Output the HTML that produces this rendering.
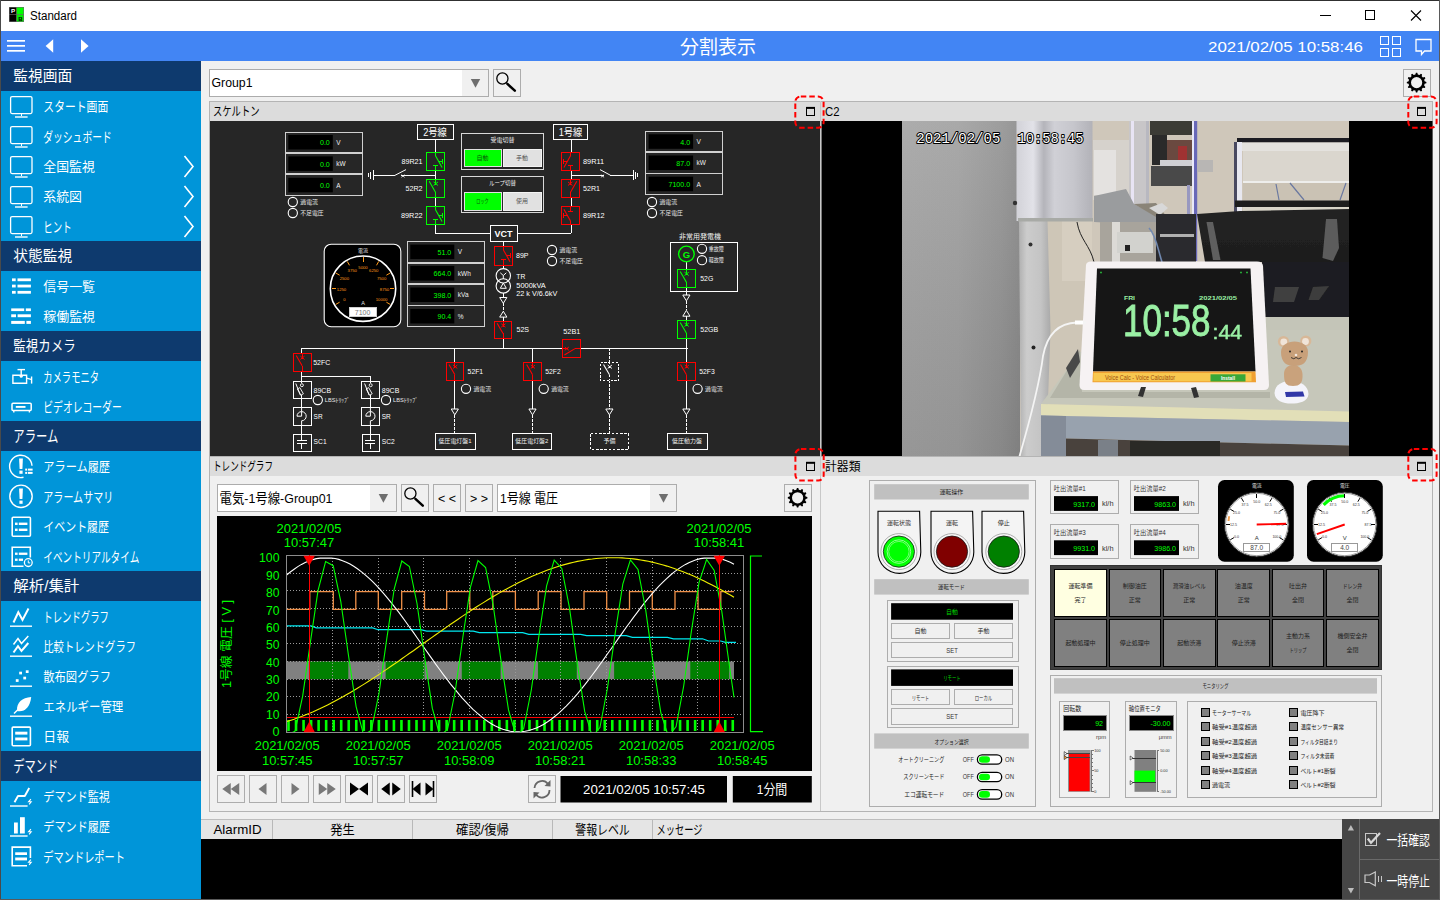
<!DOCTYPE html>
<html lang="ja"><head><meta charset="utf-8"><title>Standard</title>
<style>
html,body{margin:0;padding:0;background:#f0f0f0;overflow:hidden}
body{width:1440px;height:900px;font-family:"Liberation Sans", "Noto Sans CJK JP", sans-serif}
svg{display:block}
text{font-family:"Liberation Sans", "Noto Sans CJK JP", sans-serif;white-space:pre}
</style></head>
<body>
<svg width="1440" height="900" viewBox="0 0 1440 900">
<rect x="0" y="0" width="1440" height="900" fill="#f0f0f0" />
<rect x="0" y="0" width="1440" height="31" fill="#fff" />
<rect x="9" y="7" width="15" height="15" fill="#6a6a6a" />
<rect x="9.6" y="7.6" width="6.6" height="6.6" fill="#000" />
<rect x="9.6" y="14.8" width="6.6" height="6.6" fill="#000" />
<rect x="16.8" y="7.6" width="6.6" height="6.6" fill="#00ff00" />
<rect x="16.8" y="14.8" width="6.6" height="6.6" fill="#00f000" />
<text x="11" y="13.33" font-size="6.2" fill="#fff" font-weight="bold" >P</text>
<text x="18.3" y="20.56" font-size="6" fill="#000" font-weight="bold" >B</text>
<text x="30" y="20.32" font-size="12" fill="#000" textLength="47" lengthAdjust="spacingAndGlyphs" >Standard</text>
<line x1="1320" y1="15.5" x2="1331" y2="15.5" stroke="#000" stroke-width="1"  shape-rendering="crispEdges"/>
<rect x="1365.5" y="10.5" width="9" height="9" fill="none" stroke="#000" stroke-width="1" shape-rendering="crispEdges" />
<path d="M1411 10.5 L1421 20.5 M1421 10.5 L1411 20.5" fill="none" stroke="#000" stroke-width="1.1" />
<rect x="0" y="31" width="1440" height="30" fill="#4285f4" />
<rect x="7" y="40" width="18" height="1.7" fill="#fff" />
<rect x="7" y="45" width="18" height="1.7" fill="#fff" />
<rect x="7" y="50" width="18" height="1.7" fill="#fff" />
<polygon points="53.2,39.2 53.2,52.8 45.6,46" fill="#fff" />
<polygon points="81,39.2 81,52.8 88.6,46" fill="#fff" />
<text x="680" y="54.14" font-size="19" fill="#fff" textLength="76" lengthAdjust="spacingAndGlyphs" >分割表示</text>
<text x="1208" y="51.72" font-size="14.5" fill="#fff" textLength="155" lengthAdjust="spacingAndGlyphs" >2021/02/05 10:58:46</text>
<rect x="1380.5" y="36.5" width="8" height="8" fill="none" stroke="#fff" stroke-width="1" shape-rendering="crispEdges" />
<rect x="1392.5" y="36.5" width="8" height="8" fill="none" stroke="#fff" stroke-width="1" shape-rendering="crispEdges" />
<rect x="1380.5" y="48.5" width="8" height="8" fill="none" stroke="#fff" stroke-width="1" shape-rendering="crispEdges" />
<rect x="1392.5" y="48.5" width="8" height="8" fill="none" stroke="#fff" stroke-width="1" shape-rendering="crispEdges" />
<path d="M1416 39.5 H1431 V51 H1424.5 L1421.5 54.5 V51 H1416 Z" fill="none" stroke="#fff" stroke-width="1.3" />
<rect x="0" y="61" width="201" height="839" fill="#0095d9" />
<rect x="0" y="61" width="201" height="30" fill="#0e3a6e" />
<text x="13.3" y="81.40" font-size="15" fill="#fff" textLength="59" lengthAdjust="spacingAndGlyphs" >監視画面</text>
<text x="43.3" y="111.18" font-size="13" fill="#fff" textLength="65" lengthAdjust="spacingAndGlyphs" >スタート画面</text>
<rect x="10.6" y="96.6" width="21.4" height="17" fill="none" stroke="#fff" stroke-width="1.3" rx="1.5" />
<line x1="21.5" y1="114" x2="21.5" y2="116" stroke="#fff" stroke-width="1"  shape-rendering="crispEdges"/>
<line x1="15" y1="117" x2="27.6" y2="117" stroke="#fff" stroke-width="1.4" />
<text x="43.3" y="141.54" font-size="14" fill="#fff" textLength="68.4" lengthAdjust="spacingAndGlyphs" >ダッシュボード</text>
<rect x="10.6" y="126.6" width="21.4" height="17" fill="none" stroke="#fff" stroke-width="1.3" rx="1.5" />
<line x1="21.5" y1="144" x2="21.5" y2="146" stroke="#fff" stroke-width="1"  shape-rendering="crispEdges"/>
<line x1="15" y1="147" x2="27.6" y2="147" stroke="#fff" stroke-width="1.4" />
<text x="43.3" y="171.18" font-size="13" fill="#fff" textLength="51.6" lengthAdjust="spacingAndGlyphs" >全国監視</text>
<rect x="10.6" y="156.6" width="21.4" height="17" fill="none" stroke="#fff" stroke-width="1.3" rx="1.5" />
<line x1="21.5" y1="174" x2="21.5" y2="176" stroke="#fff" stroke-width="1"  shape-rendering="crispEdges"/>
<line x1="15" y1="177" x2="27.6" y2="177" stroke="#fff" stroke-width="1.4" />
<path d="M184.5 156 L193 166.5 L184.5 177" fill="none" stroke="#fff" stroke-width="1.6" />
<text x="43.3" y="201.18" font-size="13" fill="#fff" textLength="38.6" lengthAdjust="spacingAndGlyphs" >系統図</text>
<rect x="10.6" y="186.6" width="21.4" height="17" fill="none" stroke="#fff" stroke-width="1.3" rx="1.5" />
<line x1="21.5" y1="204" x2="21.5" y2="206" stroke="#fff" stroke-width="1"  shape-rendering="crispEdges"/>
<line x1="15" y1="207" x2="27.6" y2="207" stroke="#fff" stroke-width="1.4" />
<path d="M184.5 186 L193 196.5 L184.5 207" fill="none" stroke="#fff" stroke-width="1.6" />
<text x="43.3" y="231.54" font-size="14" fill="#fff" textLength="28.4" lengthAdjust="spacingAndGlyphs" >ヒント</text>
<rect x="10.6" y="216.6" width="21.4" height="17" fill="none" stroke="#fff" stroke-width="1.3" rx="1.5" />
<line x1="21.5" y1="234" x2="21.5" y2="236" stroke="#fff" stroke-width="1"  shape-rendering="crispEdges"/>
<line x1="15" y1="237" x2="27.6" y2="237" stroke="#fff" stroke-width="1.4" />
<path d="M184.5 216 L193 226.5 L184.5 237" fill="none" stroke="#fff" stroke-width="1.6" />
<rect x="0" y="241" width="201" height="30" fill="#0e3a6e" />
<text x="13.3" y="261.40" font-size="15" fill="#fff" textLength="59" lengthAdjust="spacingAndGlyphs" >状態監視</text>
<text x="43.3" y="291.18" font-size="13" fill="#fff" textLength="51.7" lengthAdjust="spacingAndGlyphs" >信号一覧</text>
<rect x="12" y="278.4" width="3.7" height="2.8" fill="#fff" />
<rect x="17.5" y="278.4" width="13.4" height="2.8" fill="#fff" />
<rect x="12" y="284.65" width="3.7" height="2.8" fill="#fff" />
<rect x="17.5" y="284.65" width="13.4" height="2.8" fill="#fff" />
<rect x="12" y="290.9" width="3.7" height="2.8" fill="#fff" />
<rect x="17.5" y="290.9" width="13.4" height="2.8" fill="#fff" />
<text x="43.3" y="321.18" font-size="13" fill="#fff" textLength="51.7" lengthAdjust="spacingAndGlyphs" >稼働監視</text>
<rect x="11.2" y="308.4" width="13" height="2.7" fill="#fff" />
<rect x="25.8" y="308.4" width="5.1" height="2.7" fill="#fff" />
<rect x="11.2" y="314.3" width="4.8" height="2.9" fill="#fff" />
<rect x="17.6" y="314.3" width="13.3" height="2.9" fill="#fff" />
<rect x="11.2" y="320.9" width="13.6" height="3" fill="#fff" />
<rect x="26.4" y="320.9" width="4.5" height="3" fill="#fff" />
<rect x="0" y="331" width="201" height="30" fill="#0e3a6e" />
<text x="13.3" y="351.40" font-size="15" fill="#fff" textLength="62.4" lengthAdjust="spacingAndGlyphs" >監視カメラ</text>
<text x="43.3" y="381.54" font-size="14" fill="#fff" textLength="55.7" lengthAdjust="spacingAndGlyphs" >カメラモニタ</text>
<line x1="17.5" y1="369.6" x2="25" y2="369.6" stroke="#fff" stroke-width="1.4" />
<line x1="21.2" y1="369.6" x2="21.2" y2="375" stroke="#fff" stroke-width="1.4" />
<path d="M12.9 375.2 H26.6 V383.2 H12.9 Z" fill="none" stroke="#fff" stroke-width="1.4" />
<circle cx="21.2" cy="376.3" r="1.5" fill="#fff" />
<line x1="31.6" y1="376.5" x2="31.6" y2="383.6" stroke="#fff" stroke-width="1.4" />
<line x1="26.6" y1="378.2" x2="31" y2="379.3" stroke="#fff" stroke-width="1.2" />
<text x="43.3" y="411.54" font-size="14" fill="#fff" textLength="78.4" lengthAdjust="spacingAndGlyphs" >ビデオレコーダー</text>
<rect x="12" y="403.2" width="19.2" height="7.3" fill="none" stroke="#fff" stroke-width="1.5" rx="1" />
<line x1="15.8" y1="406.9" x2="25.5" y2="406.9" stroke="#fff" stroke-width="1.9" />
<line x1="13.8" y1="410.5" x2="13.8" y2="412.5" stroke="#fff" stroke-width="1.4" />
<line x1="29.4" y1="410.5" x2="29.4" y2="412.5" stroke="#fff" stroke-width="1.4" />
<rect x="0" y="421" width="201" height="30" fill="#0e3a6e" />
<text x="13.3" y="441.76" font-size="16" fill="#fff" textLength="45" lengthAdjust="spacingAndGlyphs" >アラーム</text>
<text x="43.3" y="471.18" font-size="13" fill="#fff" textLength="66.7" lengthAdjust="spacingAndGlyphs" >アラーム履歴</text>
<path d="M32 465.8 A11.2 11.2 0 1 0 23.5 477.3" fill="none" stroke="#fff" stroke-width="1.4" />
<path d="M19.1 458.5 H22.9 L22.4 468.90000000000003 H19.6 Z" fill="#fff" />
<rect x="19.4" y="470.6" width="3.2" height="3.2" fill="#fff" />
<rect x="25.2" y="468.6" width="2" height="2" fill="#fff" />
<rect x="28" y="468.6" width="4.6" height="2" fill="#fff" />
<rect x="25.2" y="471.9" width="2" height="2" fill="#fff" />
<rect x="28" y="471.9" width="4.6" height="2" fill="#fff" />
<text x="43.3" y="501.54" font-size="14" fill="#fff" textLength="70" lengthAdjust="spacingAndGlyphs" >アラームサマリ</text>
<circle cx="21" cy="496.3" r="11.2" fill="none" stroke="#fff" stroke-width="1.4" />
<path d="M19.1 488.5 H22.9 L22.4 498.90000000000003 H19.6 Z" fill="#fff" />
<rect x="19.4" y="500.6" width="3.2" height="3.2" fill="#fff" />
<text x="43.3" y="531.18" font-size="13" fill="#fff" textLength="65.7" lengthAdjust="spacingAndGlyphs" >イベント履歴</text>
<rect x="12.2" y="517.2" width="18.2" height="19" fill="none" stroke="#fff" stroke-width="1.6" rx="1" />
<rect x="15" y="522.6" width="2.6" height="2.4" fill="#fff" />
<rect x="18.8" y="522.6" width="8.6" height="2.4" fill="#fff" />
<rect x="15" y="528.6" width="2.6" height="2.4" fill="#fff" />
<rect x="18.8" y="528.6" width="8.6" height="2.4" fill="#fff" />
<text x="43.3" y="561.54" font-size="14" fill="#fff" textLength="96" lengthAdjust="spacingAndGlyphs" >イベントリアルタイム</text>
<path d="M23.5 566.2 H12.2 V547.3 H30.3 V557.5" fill="none" stroke="#fff" stroke-width="1.6" />
<circle cx="28.3" cy="562.6" r="3.9" fill="none" stroke="#fff" stroke-width="1.3" />
<path d="M28.3 560.4 V562.9 H30.2" fill="none" stroke="#fff" stroke-width="1" />
<rect x="15" y="552.6" width="2.6" height="2.3" fill="#fff" />
<rect x="18.8" y="552.6" width="8.6" height="2.3" fill="#fff" />
<rect x="15" y="558.6" width="2.6" height="2.3" fill="#fff" />
<rect x="18.8" y="558.6" width="4.2" height="2.3" fill="#fff" />
<rect x="0" y="571" width="201" height="30" fill="#0e3a6e" />
<text x="13.3" y="591.40" font-size="15" fill="#fff" textLength="66" lengthAdjust="spacingAndGlyphs" >解析/集計</text>
<text x="43.3" y="621.54" font-size="14" fill="#fff" textLength="65.7" lengthAdjust="spacingAndGlyphs" >トレンドグラフ</text>
<line x1="10" y1="626.2" x2="32" y2="626.2" stroke="#fff" stroke-width="1.4" />
<path d="M13.5 622.5 L18.3 612.3 L22.5 620 L28.5 608.5" fill="none" stroke="#fff" stroke-width="2" />
<text x="43.3" y="651.18" font-size="13" fill="#fff" textLength="92.7" lengthAdjust="spacingAndGlyphs" >比較トレンドグラフ</text>
<line x1="10" y1="656.2" x2="32" y2="656.2" stroke="#fff" stroke-width="1.4" />
<path d="M13.5 644.5 L18 638.5 L21.5 643.5 L28.3 636" fill="none" stroke="#fff" stroke-width="1.5" />
<path d="M13.5 652.5 L18 646.2 L21.5 651 L28.3 643" fill="none" stroke="#fff" stroke-width="2" />
<text x="43.3" y="681.18" font-size="13" fill="#fff" textLength="67.7" lengthAdjust="spacingAndGlyphs" >散布図グラフ</text>
<line x1="10" y1="686.2" x2="32" y2="686.2" stroke="#fff" stroke-width="1.4" />
<rect x="19.2" y="671.7" width="2.8" height="2.7" fill="#fff" />
<rect x="25.8" y="670.3" width="2.8" height="2.7" fill="#fff" />
<rect x="23.3" y="676.7" width="2.8" height="2.7" fill="#fff" />
<rect x="15.8" y="679.2" width="2.8" height="2.7" fill="#fff" />
<text x="43.3" y="711.18" font-size="13" fill="#fff" textLength="80" lengthAdjust="spacingAndGlyphs" >エネルギー管理</text>
<line x1="10" y1="716.2" x2="32" y2="716.2" stroke="#fff" stroke-width="1.4" />
<path d="M31.2 697 C22 698 16.5 702 17 711 C24 712.5 30 708 31.2 697 Z" fill="#fff" />
<path d="M17.5 710 L14 713.5" fill="none" stroke="#fff" stroke-width="1.4" />
<text x="43.3" y="741.18" font-size="13" fill="#fff" textLength="25.7" lengthAdjust="spacingAndGlyphs" >日報</text>
<rect x="12.2" y="727.1" width="18.2" height="18.7" fill="none" stroke="#fff" stroke-width="1.6" rx="1" />
<rect x="15.2" y="731.7" width="12.2" height="2.9" fill="#fff" />
<rect x="15.2" y="737.5" width="12.2" height="2.9" fill="#fff" />
<rect x="0" y="751" width="201" height="30" fill="#0e3a6e" />
<text x="13.3" y="771.76" font-size="16" fill="#fff" textLength="45" lengthAdjust="spacingAndGlyphs" >デマンド</text>
<text x="43.3" y="801.18" font-size="13" fill="#fff" textLength="66.7" lengthAdjust="spacingAndGlyphs" >デマンド監視</text>
<line x1="10" y1="806" x2="27.6" y2="806" stroke="#fff" stroke-width="1.4" />
<path d="M14.5 802.3 L18 796 H24.8 L29.2 788" fill="none" stroke="#fff" stroke-width="1.9" stroke-linejoin="round"/>
<path d="M30.900000000000002 799.2 L28.6 801.8000000000001 H31.200000000000003 L29.1 804.4000000000001" fill="none" stroke="#fff" stroke-width="1.1" />
<text x="43.3" y="831.18" font-size="13" fill="#fff" textLength="66.7" lengthAdjust="spacingAndGlyphs" >デマンド履歴</text>
<line x1="10" y1="836" x2="27.6" y2="836" stroke="#fff" stroke-width="1.4" />
<rect x="14" y="822.5" width="3.8" height="11" fill="#fff" />
<rect x="20" y="817.2" width="4.8" height="16.3" fill="#fff" />
<path d="M30.900000000000002 829.2 L28.6 831.8000000000001 H31.200000000000003 L29.1 834.4000000000001" fill="none" stroke="#fff" stroke-width="1.1" />
<text x="43.3" y="861.54" font-size="14" fill="#fff" textLength="81.7" lengthAdjust="spacingAndGlyphs" >デマンドレポート</text>
<path d="M30.4 858 V847.1 H12.2 V865.8 H27" fill="none" stroke="#fff" stroke-width="1.6" />
<rect x="15.2" y="852.3" width="11.8" height="2.7" fill="#fff" />
<rect x="15.2" y="857.5" width="11.8" height="2.9" fill="#fff" />
<path d="M30.900000000000002 859.6 L28.6 862.2 H31.200000000000003 L29.1 864.8000000000001" fill="none" stroke="#fff" stroke-width="1.1" />
<rect x="0" y="0" width="1440" height="1" fill="#303030" />
<rect x="0" y="0" width="1" height="900" fill="#4a4a4a" />
<rect x="1439" y="0" width="1" height="900" fill="#606060" />
<rect x="0" y="899" width="1440" height="1" fill="#606060" />
<rect x="209.5" y="69.5" width="279" height="27" fill="#fff" stroke="#acacac" stroke-width="1" shape-rendering="crispEdges" />
<rect x="462" y="70" width="26" height="26" fill="#f0f0f0" />
<polygon points="470.8,79 480.2,79 475.5,87.8" fill="#6e6e6e" />
<text x="211.5" y="87.46" font-size="13.5" fill="#000" textLength="41" lengthAdjust="spacingAndGlyphs" >Group1</text>
<rect x="493.5" y="69.5" width="27" height="27" fill="#f0f0f0" stroke="#adadad" stroke-width="1" shape-rendering="crispEdges" />
<circle cx="502.4" cy="78.5" r="5.6" fill="none" stroke="#000" stroke-width="1.3" />
<line x1="507.4" y1="83.9" x2="514.8" y2="90.7" stroke="#000" stroke-width="2.5" stroke-linecap="round"/>
<rect x="1403.5" y="69.5" width="27" height="27" fill="#f0f0f0" stroke="#adadad" stroke-width="1" shape-rendering="crispEdges" />
<path d="M1424.60 81.33 L1426.38 81.92 L1426.38 83.28 L1424.60 83.87 L1424.16 85.50 L1425.41 86.90 L1424.72 88.08 L1422.89 87.70 L1421.70 88.89 L1422.08 90.72 L1420.90 91.41 L1419.50 90.16 L1417.87 90.60 L1417.28 92.38 L1415.92 92.38 L1415.33 90.60 L1413.70 90.16 L1412.30 91.41 L1411.12 90.72 L1411.50 88.89 L1410.31 87.70 L1408.48 88.08 L1407.79 86.90 L1409.04 85.50 L1408.60 83.87 L1406.82 83.28 L1406.82 81.92 L1408.60 81.33 L1409.04 79.70 L1407.79 78.30 L1408.48 77.12 L1410.31 77.50 L1411.50 76.31 L1411.12 74.48 L1412.30 73.79 L1413.70 75.04 L1415.33 74.60 L1415.92 72.82 L1417.28 72.82 L1417.87 74.60 L1419.50 75.04 L1420.90 73.79 L1422.08 74.48 L1421.70 76.31 L1422.89 77.50 L1424.72 77.12 L1425.41 78.30 L1424.16 79.70 Z M1422.20 82.60 A5.6 5.6 0 1 0 1411.00 82.60 A5.6 5.6 0 1 0 1422.20 82.60 Z" fill="#000" fill-rule="evenodd"/>
<rect x="209" y="101" width="1224" height="355" fill="#f0f0f0" />
<rect x="209" y="101.5" width="612" height="19.5" fill="#dcdcdc" />
<line x1="209" y1="101.5" x2="821" y2="101.5" stroke="#b4b4b4" stroke-width="1"  shape-rendering="crispEdges"/>
<text x="213" y="116.00" font-size="12.5" fill="#000" textLength="46.5" lengthAdjust="spacingAndGlyphs" >スケルトン</text>
<rect x="209.5" y="121" width="611" height="335" fill="#262626" />
<line x1="209.5" y1="101" x2="209.5" y2="456" stroke="#b4b4b4" stroke-width="1"  shape-rendering="crispEdges"/>
<rect x="285.5" y="132.5" width="77" height="20" fill="#262626" stroke="#d0d0d0" stroke-width="1" shape-rendering="crispEdges" />
<rect x="288.3" y="135" width="44.5" height="14.5" fill="#000" />
<text x="329.8" y="145.43" font-size="8" fill="#00ff00" text-anchor="end" textLength="9.8412" lengthAdjust="spacingAndGlyphs" >0.0</text>
<text x="336.3" y="144.89" font-size="6.5" fill="#f0f0f0" >V</text>
<rect x="285.5" y="153.5" width="77" height="20" fill="#262626" stroke="#d0d0d0" stroke-width="1" shape-rendering="crispEdges" />
<rect x="288.3" y="156.4" width="44.5" height="14.5" fill="#000" />
<text x="329.8" y="166.83" font-size="8" fill="#00ff00" text-anchor="end" textLength="9.8412" lengthAdjust="spacingAndGlyphs" >0.0</text>
<text x="336.3" y="166.29" font-size="6.5" fill="#f0f0f0" >kW</text>
<rect x="285.5" y="174.5" width="77" height="21" fill="#262626" stroke="#d0d0d0" stroke-width="1" shape-rendering="crispEdges" />
<rect x="288.3" y="177.8" width="44.5" height="14.5" fill="#000" />
<text x="329.8" y="188.23" font-size="8" fill="#00ff00" text-anchor="end" textLength="9.8412" lengthAdjust="spacingAndGlyphs" >0.0</text>
<text x="336.3" y="187.69" font-size="6.5" fill="#f0f0f0" >A</text>
<circle cx="292.8" cy="202" r="4.6" fill="none" stroke="#fff" stroke-width="1.1" />
<text x="300.3" y="204.23" font-size="6.2" fill="#e8e8e8" textLength="17.5" lengthAdjust="spacingAndGlyphs" >過電流</text>
<circle cx="292.8" cy="213" r="4.6" fill="none" stroke="#fff" stroke-width="1.1" />
<text x="300.3" y="215.23" font-size="6.2" fill="#e8e8e8" textLength="23.3" lengthAdjust="spacingAndGlyphs" >不足電圧</text>
<rect x="645.5" y="131.5" width="77" height="20" fill="#262626" stroke="#d0d0d0" stroke-width="1" shape-rendering="crispEdges" />
<rect x="648.6" y="134.3" width="44.5" height="14.5" fill="#000" />
<text x="690.1" y="144.73" font-size="8" fill="#00ff00" text-anchor="end" textLength="9.8412" lengthAdjust="spacingAndGlyphs" >4.0</text>
<text x="696.6" y="144.19" font-size="6.5" fill="#f0f0f0" >V</text>
<rect x="645.5" y="152.5" width="77" height="21" fill="#262626" stroke="#d0d0d0" stroke-width="1" shape-rendering="crispEdges" />
<rect x="648.6" y="155.5" width="44.5" height="14.5" fill="#000" />
<text x="690.1" y="165.93" font-size="8" fill="#00ff00" text-anchor="end" textLength="13.7777" lengthAdjust="spacingAndGlyphs" >87.0</text>
<text x="696.6" y="165.39" font-size="6.5" fill="#f0f0f0" >kW</text>
<rect x="645.5" y="173.5" width="77" height="21" fill="#262626" stroke="#d0d0d0" stroke-width="1" shape-rendering="crispEdges" />
<rect x="648.6" y="176.7" width="44.5" height="14.5" fill="#000" />
<text x="690.1" y="187.13" font-size="8" fill="#00ff00" text-anchor="end" textLength="21.6506" lengthAdjust="spacingAndGlyphs" >7100.0</text>
<text x="696.6" y="186.59" font-size="6.5" fill="#f0f0f0" >A</text>
<circle cx="652" cy="202" r="4.6" fill="none" stroke="#fff" stroke-width="1.1" />
<text x="659.5" y="204.23" font-size="6.2" fill="#e8e8e8" textLength="17.5" lengthAdjust="spacingAndGlyphs" >過電流</text>
<circle cx="652" cy="213" r="4.6" fill="none" stroke="#fff" stroke-width="1.1" />
<text x="659.5" y="215.23" font-size="6.2" fill="#e8e8e8" textLength="23.3" lengthAdjust="spacingAndGlyphs" >不足電圧</text>
<line x1="435.5" y1="140" x2="435.5" y2="233" stroke="#fff" stroke-width="1"  shape-rendering="crispEdges"/>
<line x1="435" y1="233.5" x2="490" y2="233.5" stroke="#fff" stroke-width="1"  shape-rendering="crispEdges"/>
<line x1="571.5" y1="140" x2="571.5" y2="233" stroke="#fff" stroke-width="1"  shape-rendering="crispEdges"/>
<line x1="517" y1="233.5" x2="571" y2="233.5" stroke="#fff" stroke-width="1"  shape-rendering="crispEdges"/>
<rect x="417.5" y="124.5" width="36" height="15" fill="#262626" stroke="#fff" stroke-width="1" shape-rendering="crispEdges" />
<text x="435" y="135.90" font-size="10" fill="#fff" text-anchor="middle" textLength="23.7" lengthAdjust="spacingAndGlyphs" >2号線</text>
<rect x="553.5" y="124.5" width="34" height="15" fill="#262626" stroke="#fff" stroke-width="1" shape-rendering="crispEdges" />
<text x="570.5" y="135.90" font-size="10" fill="#fff" text-anchor="middle" textLength="23.7" lengthAdjust="spacingAndGlyphs" >1号線</text>
<line x1="374" y1="175.5" x2="395" y2="175.5" stroke="#fff" stroke-width="1"  shape-rendering="crispEdges"/>
<line x1="395" y1="175.3" x2="406" y2="169.6" stroke="#fff" stroke-width="1" />
<line x1="401" y1="175.5" x2="435" y2="175.5" stroke="#fff" stroke-width="1"  shape-rendering="crispEdges"/>
<line x1="401.4" y1="174.72" x2="404.6" y2="177.28" stroke="#fff" stroke-width="0.8" />
<line x1="401.4" y1="177.28" x2="404.6" y2="174.72" stroke="#fff" stroke-width="0.8" />
<line x1="373.5" y1="170" x2="373.5" y2="180" stroke="#fff" stroke-width="1"  shape-rendering="crispEdges"/>
<line x1="370.5" y1="172" x2="370.5" y2="179" stroke="#fff" stroke-width="1"  shape-rendering="crispEdges"/>
<line x1="368.5" y1="173" x2="368.5" y2="177" stroke="#fff" stroke-width="1"  shape-rendering="crispEdges"/>
<line x1="571" y1="175.5" x2="604" y2="175.5" stroke="#fff" stroke-width="1"  shape-rendering="crispEdges"/>
<line x1="600" y1="169.6" x2="610.5" y2="175.3" stroke="#fff" stroke-width="1" />
<line x1="610" y1="175.5" x2="633" y2="175.5" stroke="#fff" stroke-width="1"  shape-rendering="crispEdges"/>
<line x1="600.9" y1="174.72" x2="604.1" y2="177.28" stroke="#fff" stroke-width="0.8" />
<line x1="600.9" y1="177.28" x2="604.1" y2="174.72" stroke="#fff" stroke-width="0.8" />
<line x1="633.5" y1="170" x2="633.5" y2="180" stroke="#fff" stroke-width="1"  shape-rendering="crispEdges"/>
<line x1="635.5" y1="172" x2="635.5" y2="179" stroke="#fff" stroke-width="1"  shape-rendering="crispEdges"/>
<line x1="637.5" y1="173" x2="637.5" y2="177" stroke="#fff" stroke-width="1"  shape-rendering="crispEdges"/>
<rect x="426.5" y="152.5" width="18" height="18" fill="#262626" stroke="#00ff00" stroke-width="1" shape-rendering="crispEdges" />
<line x1="435.5" y1="152" x2="435.5" y2="156" stroke="#00ff00" stroke-width="1"  shape-rendering="crispEdges"/>
<line x1="435.5" y1="155.8" x2="442.1" y2="167.6" stroke="#00ff00" stroke-width="1.1" />
<line x1="439" y1="161.5" x2="443" y2="161.5" stroke="#00ff00" stroke-width="1"  shape-rendering="crispEdges"/>
<line x1="442.5" y1="159" x2="442.5" y2="164" stroke="#00ff00" stroke-width="1"  shape-rendering="crispEdges"/>
<line x1="433" y1="165.5" x2="438" y2="165.5" stroke="#00ff00" stroke-width="1"  shape-rendering="crispEdges"/>
<line x1="435.5" y1="165" x2="435.5" y2="171" stroke="#00ff00" stroke-width="1"  shape-rendering="crispEdges"/>
<rect x="426.5" y="179.5" width="18" height="18" fill="#262626" stroke="#00ff00" stroke-width="1" shape-rendering="crispEdges" />
<line x1="435.5" y1="179" x2="435.5" y2="185" stroke="#00ff00" stroke-width="1"  shape-rendering="crispEdges"/>
<line x1="429.2" y1="181.3" x2="435.5" y2="192.2" stroke="#00ff00" stroke-width="1.1" />
<line x1="435.5" y1="192" x2="435.5" y2="198" stroke="#00ff00" stroke-width="1"  shape-rendering="crispEdges"/>
<line x1="433.6" y1="181.94" x2="438" y2="185.46" stroke="#00ff00" stroke-width="1" />
<line x1="433.6" y1="185.46" x2="438" y2="181.94" stroke="#00ff00" stroke-width="1" />
<rect x="426.5" y="206.5" width="18" height="18" fill="#262626" stroke="#00ff00" stroke-width="1" shape-rendering="crispEdges" />
<line x1="435.5" y1="206" x2="435.5" y2="210" stroke="#00ff00" stroke-width="1"  shape-rendering="crispEdges"/>
<line x1="435.5" y1="209.7" x2="442.1" y2="221.5" stroke="#00ff00" stroke-width="1.1" />
<line x1="439" y1="215.5" x2="443" y2="215.5" stroke="#00ff00" stroke-width="1"  shape-rendering="crispEdges"/>
<line x1="442.5" y1="213" x2="442.5" y2="218" stroke="#00ff00" stroke-width="1"  shape-rendering="crispEdges"/>
<line x1="433" y1="219.5" x2="438" y2="219.5" stroke="#00ff00" stroke-width="1"  shape-rendering="crispEdges"/>
<line x1="435.5" y1="219" x2="435.5" y2="225" stroke="#00ff00" stroke-width="1"  shape-rendering="crispEdges"/>
<text x="422.5" y="163.88" font-size="8" fill="#fff" text-anchor="end" textLength="21" lengthAdjust="spacingAndGlyphs" >89R21</text>
<text x="422.5" y="190.88" font-size="8" fill="#fff" text-anchor="end" textLength="17" lengthAdjust="spacingAndGlyphs" >52R2</text>
<text x="422.5" y="218.38" font-size="8" fill="#fff" text-anchor="end" textLength="21.5" lengthAdjust="spacingAndGlyphs" >89R22</text>
<rect x="561.5" y="152.5" width="18" height="18" fill="#262626" stroke="#ff0000" stroke-width="1" shape-rendering="crispEdges" />
<line x1="570.5" y1="152" x2="570.5" y2="156" stroke="#ff0000" stroke-width="1"  shape-rendering="crispEdges"/>
<line x1="570.5" y1="155.8" x2="563.9" y2="167.6" stroke="#ff0000" stroke-width="1.1" />
<line x1="567" y1="161.5" x2="563" y2="161.5" stroke="#ff0000" stroke-width="1"  shape-rendering="crispEdges"/>
<line x1="563.5" y1="159" x2="563.5" y2="164" stroke="#ff0000" stroke-width="1"  shape-rendering="crispEdges"/>
<line x1="573" y1="165.5" x2="568" y2="165.5" stroke="#ff0000" stroke-width="1"  shape-rendering="crispEdges"/>
<line x1="570.5" y1="165" x2="570.5" y2="171" stroke="#ff0000" stroke-width="1"  shape-rendering="crispEdges"/>
<rect x="561.5" y="179.5" width="18" height="18" fill="#262626" stroke="#ff0000" stroke-width="1" shape-rendering="crispEdges" />
<line x1="570.5" y1="179" x2="570.5" y2="185" stroke="#ff0000" stroke-width="1"  shape-rendering="crispEdges"/>
<line x1="576.8" y1="181.3" x2="570.5" y2="192.2" stroke="#ff0000" stroke-width="1.1" />
<line x1="570.5" y1="192" x2="570.5" y2="198" stroke="#ff0000" stroke-width="1"  shape-rendering="crispEdges"/>
<line x1="568" y1="181.94" x2="572.4" y2="185.46" stroke="#ff0000" stroke-width="1" />
<line x1="568" y1="185.46" x2="572.4" y2="181.94" stroke="#ff0000" stroke-width="1" />
<rect x="561.5" y="206.5" width="18" height="18" fill="#262626" stroke="#ff0000" stroke-width="1" shape-rendering="crispEdges" />
<line x1="570.5" y1="225" x2="570.5" y2="221" stroke="#ff0000" stroke-width="1"  shape-rendering="crispEdges"/>
<line x1="570.5" y1="221.1" x2="563.9" y2="209.3" stroke="#ff0000" stroke-width="1.1" />
<line x1="567" y1="215.5" x2="563" y2="215.5" stroke="#ff0000" stroke-width="1"  shape-rendering="crispEdges"/>
<line x1="563.5" y1="218" x2="563.5" y2="213" stroke="#ff0000" stroke-width="1"  shape-rendering="crispEdges"/>
<line x1="573" y1="211.5" x2="568" y2="211.5" stroke="#ff0000" stroke-width="1"  shape-rendering="crispEdges"/>
<line x1="570.5" y1="212" x2="570.5" y2="206" stroke="#ff0000" stroke-width="1"  shape-rendering="crispEdges"/>
<text x="583" y="163.88" font-size="8" fill="#fff" textLength="21" lengthAdjust="spacingAndGlyphs" >89R11</text>
<text x="583" y="190.88" font-size="8" fill="#fff" textLength="17" lengthAdjust="spacingAndGlyphs" >52R1</text>
<text x="583" y="218.38" font-size="8" fill="#fff" textLength="21.5" lengthAdjust="spacingAndGlyphs" >89R12</text>
<rect x="461.5" y="133.5" width="82" height="36" fill="#262626" stroke="#d8d8d8" stroke-width="1" shape-rendering="crispEdges" />
<text x="502.5" y="142.03" font-size="6.2" fill="#f0f0f0" text-anchor="middle" textLength="24" lengthAdjust="spacingAndGlyphs" >受電切替</text>
<rect x="464.5" y="149.5" width="37" height="17" fill="#00ff00" stroke="#e0e0e0" stroke-width="1" shape-rendering="crispEdges" />
<text x="482.5" y="159.53" font-size="6.2" fill="#0a5a0a" text-anchor="middle" textLength="12" lengthAdjust="spacingAndGlyphs" >自動</text>
<rect x="503.5" y="149.5" width="38" height="17" fill="#e1e1e1" stroke="#f4f4f4" stroke-width="1" shape-rendering="crispEdges" />
<text x="522" y="159.53" font-size="6.2" fill="#555" text-anchor="middle" textLength="12" lengthAdjust="spacingAndGlyphs" >手動</text>
<rect x="461.5" y="176.5" width="82" height="36" fill="#262626" stroke="#d8d8d8" stroke-width="1" shape-rendering="crispEdges" />
<text x="502.5" y="185.43" font-size="6.2" fill="#f0f0f0" text-anchor="middle" textLength="27" lengthAdjust="spacingAndGlyphs" >ループ切替</text>
<rect x="464.5" y="192.5" width="37" height="18" fill="#00ff00" stroke="#e0e0e0" stroke-width="1" shape-rendering="crispEdges" />
<text x="482.5" y="202.93" font-size="6.2" fill="#0a5a0a" text-anchor="middle" textLength="12.5" lengthAdjust="spacingAndGlyphs" >ロック</text>
<rect x="503.5" y="192.5" width="38" height="18" fill="#e1e1e1" stroke="#f4f4f4" stroke-width="1" shape-rendering="crispEdges" />
<text x="522" y="202.93" font-size="6.2" fill="#555" text-anchor="middle" textLength="12" lengthAdjust="spacingAndGlyphs" >使用</text>
<rect x="490.5" y="225.5" width="27" height="16" fill="#262626" stroke="#fff" stroke-width="1" shape-rendering="crispEdges" />
<text x="503.6" y="236.74" font-size="9" fill="#fff" text-anchor="middle" textLength="18" lengthAdjust="spacingAndGlyphs" font-weight="bold" >VCT</text>
<line x1="503.5" y1="241" x2="503.5" y2="268" stroke="#fff" stroke-width="1"  shape-rendering="crispEdges"/>
<line x1="503.5" y1="293" x2="503.5" y2="298" stroke="#fff" stroke-width="1"  shape-rendering="crispEdges"/>
<rect x="494.5" y="246.5" width="18" height="19" fill="#262626" stroke="#ff0000" stroke-width="1" shape-rendering="crispEdges" />
<line x1="503.5" y1="246" x2="503.5" y2="250" stroke="#ff0000" stroke-width="1"  shape-rendering="crispEdges"/>
<line x1="503.4" y1="249.9" x2="510" y2="261.7" stroke="#ff0000" stroke-width="1.1" />
<line x1="507" y1="255.5" x2="510" y2="255.5" stroke="#ff0000" stroke-width="1"  shape-rendering="crispEdges"/>
<line x1="510.5" y1="253" x2="510.5" y2="258" stroke="#ff0000" stroke-width="1"  shape-rendering="crispEdges"/>
<line x1="501" y1="259.5" x2="506" y2="259.5" stroke="#ff0000" stroke-width="1"  shape-rendering="crispEdges"/>
<line x1="503.5" y1="259" x2="503.5" y2="265" stroke="#ff0000" stroke-width="1"  shape-rendering="crispEdges"/>
<text x="516" y="258.38" font-size="8" fill="#fff" textLength="12.5" lengthAdjust="spacingAndGlyphs" >89P</text>
<circle cx="552" cy="250" r="4.6" fill="none" stroke="#fff" stroke-width="1.1" />
<text x="559.5" y="252.23" font-size="6.2" fill="#e8e8e8" textLength="17.5" lengthAdjust="spacingAndGlyphs" >過電流</text>
<circle cx="552" cy="261" r="4.6" fill="none" stroke="#fff" stroke-width="1.1" />
<text x="559.5" y="263.23" font-size="6.2" fill="#e8e8e8" textLength="23.3" lengthAdjust="spacingAndGlyphs" >不足電圧</text>
<circle cx="503.3" cy="275.8" r="7.2" fill="#262626" stroke="#fff" stroke-width="1.1" />
<circle cx="503.3" cy="285.9" r="7.2" fill="none" stroke="#fff" stroke-width="1.1" />
<path d="M500.3 272.8 L503.3 275.5 L506.3 272.8 M503.3 275.5 V279" fill="none" stroke="#fff" stroke-width="1" />
<polygon points="500.3,288.3 506.3,288.3 503.3,283" fill="none" stroke="#fff" stroke-width="1" />
<text x="516.3" y="279.18" font-size="8" fill="#fff" textLength="9" lengthAdjust="spacingAndGlyphs" >TR</text>
<text x="516.3" y="287.58" font-size="8" fill="#fff" textLength="29.5" lengthAdjust="spacingAndGlyphs" >5000kVA</text>
<text x="516.3" y="295.68" font-size="8" fill="#fff" textLength="41" lengthAdjust="spacingAndGlyphs" >22 k V/6.6kV</text>
<polygon points="499.7,297.5 506.9,297.5 503.3,303.3" fill="#262626" stroke="#fff" stroke-width="1" />
<line x1="503.5" y1="303" x2="503.5" y2="312" stroke="#fff" stroke-width="1" stroke-dasharray="2.5 1.5" shape-rendering="crispEdges"/>
<polygon points="499.7,317.1 506.9,317.1 503.3,311.3" fill="#262626" stroke="#fff" stroke-width="1" />
<line x1="503.5" y1="317" x2="503.5" y2="348" stroke="#fff" stroke-width="1"  shape-rendering="crispEdges"/>
<rect x="494.5" y="321.5" width="17" height="17" fill="#262626" stroke="#ff0000" stroke-width="1" shape-rendering="crispEdges" />
<line x1="503.5" y1="321" x2="503.5" y2="327" stroke="#ff0000" stroke-width="1"  shape-rendering="crispEdges"/>
<line x1="497.119" y1="323.165" x2="503.05" y2="333.428" stroke="#ff0000" stroke-width="1.1" />
<line x1="503.5" y1="333" x2="503.5" y2="339" stroke="#ff0000" stroke-width="1"  shape-rendering="crispEdges"/>
<line x1="501.279" y1="323.768" x2="505.421" y2="327.082" stroke="#ff0000" stroke-width="1" />
<line x1="501.279" y1="327.082" x2="505.421" y2="323.768" stroke="#ff0000" stroke-width="1" />
<text x="516.5" y="332.38" font-size="8" fill="#fff" textLength="12.5" lengthAdjust="spacingAndGlyphs" >52S</text>
<rect x="324.2" y="244.2" width="76.6" height="82.5" fill="#000" stroke="#fff" stroke-width="1.1" rx="7" />
<circle cx="363" cy="288.7" r="32.7" fill="none" stroke="#fff" stroke-width="1.6" />
<text x="363" y="252.00" font-size="5" fill="#e0e0e0" text-anchor="middle" >電流</text>
<line x1="335.72" y1="304.45" x2="339.617" y2="302.2" stroke="#ff9a1a" stroke-width="1" />
<text x="344.38" y="301.26" font-size="4.2" fill="#ff9a1a" text-anchor="middle" >0</text>
<line x1="332" y1="288.5" x2="336" y2="288.5" stroke="#ff9a1a" stroke-width="1"  shape-rendering="crispEdges"/>
<text x="341.5" y="290.51" font-size="4.2" fill="#ff9a1a" text-anchor="middle" >1250</text>
<line x1="335.72" y1="272.95" x2="339.617" y2="275.2" stroke="#ff9a1a" stroke-width="1" />
<text x="344.38" y="279.76" font-size="4.2" fill="#ff9a1a" text-anchor="middle" >2500</text>
<line x1="347.25" y1="261.42" x2="349.5" y2="265.317" stroke="#ff9a1a" stroke-width="1" />
<text x="352.25" y="271.89" font-size="4.2" fill="#ff9a1a" text-anchor="middle" >3750</text>
<line x1="363.5" y1="257" x2="363.5" y2="262" stroke="#ff9a1a" stroke-width="1"  shape-rendering="crispEdges"/>
<text x="363" y="269.01" font-size="4.2" fill="#ff9a1a" text-anchor="middle" >5000</text>
<line x1="378.75" y1="261.42" x2="376.5" y2="265.317" stroke="#ff9a1a" stroke-width="1" />
<text x="373.75" y="271.89" font-size="4.2" fill="#ff9a1a" text-anchor="middle" >6250</text>
<line x1="390.28" y1="272.95" x2="386.383" y2="275.2" stroke="#ff9a1a" stroke-width="1" />
<text x="381.62" y="279.76" font-size="4.2" fill="#ff9a1a" text-anchor="middle" >7500</text>
<line x1="394" y1="288.5" x2="390" y2="288.5" stroke="#ff9a1a" stroke-width="1"  shape-rendering="crispEdges"/>
<text x="384.5" y="290.51" font-size="4.2" fill="#ff9a1a" text-anchor="middle" >8750</text>
<line x1="390.28" y1="304.45" x2="386.383" y2="302.2" stroke="#ff9a1a" stroke-width="1" />
<text x="381.62" y="301.26" font-size="4.2" fill="#ff9a1a" text-anchor="middle" >10000</text>
<text x="363" y="304.98" font-size="5.5" fill="#e0e0e0" text-anchor="middle" >A</text>
<rect x="349.5" y="307.5" width="27" height="9" fill="#fff" stroke="#cfcfcf" stroke-width="1" shape-rendering="crispEdges" />
<text x="362.6" y="314.52" font-size="7" fill="#777" text-anchor="middle" >7100</text>
<rect x="407.5" y="241.5" width="77" height="21" fill="#262626" stroke="#d0d0d0" stroke-width="1" shape-rendering="crispEdges" />
<rect x="410.3" y="244.6" width="44" height="14.5" fill="#000" />
<text x="451.3" y="255.03" font-size="8" fill="#00ff00" text-anchor="end" textLength="13.7777" lengthAdjust="spacingAndGlyphs" >51.0</text>
<text x="457.8" y="254.49" font-size="6.5" fill="#f0f0f0" >V</text>
<rect x="407.5" y="263.5" width="77" height="20" fill="#262626" stroke="#d0d0d0" stroke-width="1" shape-rendering="crispEdges" />
<rect x="410.3" y="266.05" width="44" height="14.5" fill="#000" />
<text x="451.3" y="276.48" font-size="8" fill="#00ff00" text-anchor="end" textLength="17.7142" lengthAdjust="spacingAndGlyphs" >664.0</text>
<text x="457.8" y="275.94" font-size="6.5" fill="#f0f0f0" >kWh</text>
<rect x="407.5" y="284.5" width="77" height="21" fill="#262626" stroke="#d0d0d0" stroke-width="1" shape-rendering="crispEdges" />
<rect x="410.3" y="287.5" width="44" height="14.5" fill="#000" />
<text x="451.3" y="297.93" font-size="8" fill="#00ff00" text-anchor="end" textLength="17.7142" lengthAdjust="spacingAndGlyphs" >398.0</text>
<text x="457.8" y="297.39" font-size="6.5" fill="#f0f0f0" >kVa</text>
<rect x="407.5" y="305.5" width="77" height="21" fill="#262626" stroke="#d0d0d0" stroke-width="1" shape-rendering="crispEdges" />
<rect x="410.3" y="308.95" width="44" height="14.5" fill="#000" />
<text x="451.3" y="319.38" font-size="8" fill="#00ff00" text-anchor="end" textLength="13.7777" lengthAdjust="spacingAndGlyphs" >90.4</text>
<text x="457.8" y="318.84" font-size="6.5" fill="#f0f0f0" >%</text>
<text x="700" y="238.52" font-size="7" fill="#f0f0f0" text-anchor="middle" textLength="42" lengthAdjust="spacingAndGlyphs" >非常用発電機</text>
<rect x="670.5" y="242.5" width="67" height="49" fill="#262626" stroke="#fff" stroke-width="1" shape-rendering="crispEdges" />
<line x1="686.5" y1="262" x2="686.5" y2="295" stroke="#fff" stroke-width="1"  shape-rendering="crispEdges"/>
<circle cx="686.4" cy="253.9" r="7.8" fill="#262626" stroke="#00ff00" stroke-width="1.4" />
<text x="686.4" y="257.62" font-size="9.5" fill="#00ff00" text-anchor="middle" font-weight="bold" >G</text>
<circle cx="702" cy="248.8" r="4.6" fill="none" stroke="#fff" stroke-width="1.1" />
<text x="708.8" y="250.96" font-size="6" fill="#e8e8e8" textLength="15" lengthAdjust="spacingAndGlyphs" >重故障</text>
<circle cx="702" cy="260.2" r="4.6" fill="none" stroke="#fff" stroke-width="1.1" />
<text x="708.8" y="262.36" font-size="6" fill="#e8e8e8" textLength="15" lengthAdjust="spacingAndGlyphs" >軽故障</text>
<rect x="677.5" y="269.5" width="18" height="18" fill="#262626" stroke="#00ff00" stroke-width="1" shape-rendering="crispEdges" />
<line x1="686.5" y1="269" x2="686.5" y2="275" stroke="#00ff00" stroke-width="1"  shape-rendering="crispEdges"/>
<line x1="680.218" y1="271.539" x2="686.35" y2="282.149" stroke="#00ff00" stroke-width="1.1" />
<line x1="686.5" y1="282" x2="686.5" y2="288" stroke="#00ff00" stroke-width="1"  shape-rendering="crispEdges"/>
<line x1="684.509" y1="272.162" x2="688.791" y2="275.588" stroke="#00ff00" stroke-width="1" />
<line x1="684.509" y1="275.588" x2="688.791" y2="272.162" stroke="#00ff00" stroke-width="1" />
<text x="700.3" y="281.38" font-size="8" fill="#fff" textLength="13" lengthAdjust="spacingAndGlyphs" >52G</text>
<polygon points="682.8,295 690,295 686.4,300.8" fill="#262626" stroke="#fff" stroke-width="1" />
<line x1="686.5" y1="301" x2="686.5" y2="310" stroke="#fff" stroke-width="1" stroke-dasharray="2.5 1.5" shape-rendering="crispEdges"/>
<polygon points="682.8,316.2 690,316.2 686.4,310.4" fill="#262626" stroke="#fff" stroke-width="1" />
<line x1="686.5" y1="316" x2="686.5" y2="362" stroke="#fff" stroke-width="1"  shape-rendering="crispEdges"/>
<rect x="677.5" y="320.5" width="18" height="18" fill="#262626" stroke="#00ff00" stroke-width="1" shape-rendering="crispEdges" />
<line x1="686.5" y1="320" x2="686.5" y2="326" stroke="#00ff00" stroke-width="1"  shape-rendering="crispEdges"/>
<line x1="680.218" y1="322.439" x2="686.35" y2="333.049" stroke="#00ff00" stroke-width="1.1" />
<line x1="686.5" y1="333" x2="686.5" y2="338" stroke="#00ff00" stroke-width="1"  shape-rendering="crispEdges"/>
<line x1="684.509" y1="323.062" x2="688.791" y2="326.488" stroke="#00ff00" stroke-width="1" />
<line x1="684.509" y1="326.488" x2="688.791" y2="323.062" stroke="#00ff00" stroke-width="1" />
<text x="700.3" y="332.18" font-size="8" fill="#fff" textLength="18" lengthAdjust="spacingAndGlyphs" >52GB</text>
<line x1="301" y1="348.5" x2="688" y2="348.5" stroke="#fff" stroke-width="1"  shape-rendering="crispEdges"/>
<rect x="562.5" y="339.5" width="18" height="18" fill="#262626" stroke="#ff0000" stroke-width="1" shape-rendering="crispEdges" />
<line x1="562" y1="348.5" x2="568" y2="348.5" stroke="#ff0000" stroke-width="1"  shape-rendering="crispEdges"/>
<line x1="564.8" y1="347.05" x2="568.8" y2="350.25" stroke="#ff0000" stroke-width="1" />
<line x1="564.8" y1="350.25" x2="568.8" y2="347.05" stroke="#ff0000" stroke-width="1" />
<line x1="564.4" y1="354.95" x2="575" y2="348.65" stroke="#ff0000" stroke-width="1.1" />
<line x1="575" y1="348.5" x2="580" y2="348.5" stroke="#ff0000" stroke-width="1"  shape-rendering="crispEdges"/>
<text x="563.3" y="334.18" font-size="8" fill="#fff" textLength="17" lengthAdjust="spacingAndGlyphs" >52B1</text>
<line x1="301.5" y1="348" x2="301.5" y2="451" stroke="#fff" stroke-width="1"  shape-rendering="crispEdges"/>
<line x1="302" y1="376.5" x2="370" y2="376.5" stroke="#fff" stroke-width="1"  shape-rendering="crispEdges"/>
<line x1="370.5" y1="376" x2="370.5" y2="451" stroke="#fff" stroke-width="1"  shape-rendering="crispEdges"/>
<rect x="293.5" y="353.5" width="18" height="18" fill="#262626" stroke="#ff0000" stroke-width="1" shape-rendering="crispEdges" />
<line x1="302.5" y1="353" x2="302.5" y2="359" stroke="#ff0000" stroke-width="1"  shape-rendering="crispEdges"/>
<line x1="296.219" y1="355.565" x2="302.15" y2="365.828" stroke="#ff0000" stroke-width="1.1" />
<line x1="302.5" y1="366" x2="302.5" y2="371" stroke="#ff0000" stroke-width="1"  shape-rendering="crispEdges"/>
<line x1="300.379" y1="356.168" x2="304.521" y2="359.482" stroke="#ff0000" stroke-width="1" />
<line x1="300.379" y1="359.482" x2="304.521" y2="356.168" stroke="#ff0000" stroke-width="1" />
<text x="313.2" y="365.38" font-size="8" fill="#fff" textLength="17" lengthAdjust="spacingAndGlyphs" >52FC</text>
<rect x="293.5" y="381.5" width="18" height="17" fill="#262626" stroke="#fff" stroke-width="1" shape-rendering="crispEdges" />
<line x1="301.5" y1="381" x2="301.5" y2="383" stroke="#fff" stroke-width="1"  shape-rendering="crispEdges"/>
<circle cx="301.9" cy="385.2" r="1.5" fill="#262626" stroke="#fff" stroke-width="0.9" />
<line x1="295.8" y1="383.5" x2="300.4" y2="395.2" stroke="#fff" stroke-width="1" />
<line x1="301.5" y1="395" x2="301.5" y2="399" stroke="#fff" stroke-width="1"  shape-rendering="crispEdges"/>
<path d="M297.40000000000003 389 L299.8 387.6 L303.40000000000003 393.8 L300.8 395.2 Z" fill="none" stroke="#fff" stroke-width="0.9" />
<text x="313.6" y="393.18" font-size="8" fill="#fff" textLength="17.5" lengthAdjust="spacingAndGlyphs" >89CB</text>
<circle cx="317.8" cy="400" r="4.6" fill="none" stroke="#fff" stroke-width="1.1" />
<text x="324.8" y="402.23" font-size="6.2" fill="#e8e8e8" textLength="25" lengthAdjust="spacingAndGlyphs" >LBSﾄﾘｯﾌﾟ</text>
<rect x="293.5" y="407.5" width="18" height="18" fill="#262626" stroke="#fff" stroke-width="1" shape-rendering="crispEdges" />
<path d="M301.6 407.2 V411.59999999999997 M297.0 416.2 A4.6 4.6 0 1 1 301.6 420.8 V425.6 M297.0 416.2 H301.6 V411.59999999999997" fill="none" stroke="#fff" stroke-width="1" />
<text x="313.6" y="419.28" font-size="8" fill="#fff" textLength="9" lengthAdjust="spacingAndGlyphs" >SR</text>
<rect x="293.5" y="434.5" width="18" height="17" fill="#262626" stroke="#fff" stroke-width="1" shape-rendering="crispEdges" />
<line x1="301.5" y1="434" x2="301.5" y2="440" stroke="#fff" stroke-width="1"  shape-rendering="crispEdges"/>
<line x1="297" y1="440.5" x2="307" y2="440.5" stroke="#fff" stroke-width="1"  shape-rendering="crispEdges"/>
<line x1="297" y1="443.5" x2="307" y2="443.5" stroke="#fff" stroke-width="1"  shape-rendering="crispEdges"/>
<line x1="301.5" y1="444" x2="301.5" y2="449" stroke="#fff" stroke-width="1"  shape-rendering="crispEdges"/>
<text x="313.6" y="444.08" font-size="8" fill="#fff" textLength="13" lengthAdjust="spacingAndGlyphs" >SC1</text>
<rect x="361.5" y="381.5" width="18" height="17" fill="#262626" stroke="#fff" stroke-width="1" shape-rendering="crispEdges" />
<line x1="370.5" y1="381" x2="370.5" y2="383" stroke="#fff" stroke-width="1"  shape-rendering="crispEdges"/>
<circle cx="370.7" cy="385.2" r="1.5" fill="#262626" stroke="#fff" stroke-width="0.9" />
<line x1="364.6" y1="383.5" x2="369.2" y2="395.2" stroke="#fff" stroke-width="1" />
<line x1="370.5" y1="395" x2="370.5" y2="399" stroke="#fff" stroke-width="1"  shape-rendering="crispEdges"/>
<path d="M366.2 389 L368.59999999999997 387.6 L372.2 393.8 L369.59999999999997 395.2 Z" fill="none" stroke="#fff" stroke-width="0.9" />
<text x="381.8" y="393.18" font-size="8" fill="#fff" textLength="17.5" lengthAdjust="spacingAndGlyphs" >89CB</text>
<circle cx="386" cy="400" r="4.6" fill="none" stroke="#fff" stroke-width="1.1" />
<text x="393" y="402.23" font-size="6.2" fill="#e8e8e8" textLength="25" lengthAdjust="spacingAndGlyphs" >LBSﾄﾘｯﾌﾟ</text>
<rect x="361.5" y="407.5" width="18" height="18" fill="#262626" stroke="#fff" stroke-width="1" shape-rendering="crispEdges" />
<path d="M370.4 407.2 V411.59999999999997 M365.79999999999995 416.2 A4.6 4.6 0 1 1 370.4 420.8 V425.6 M365.79999999999995 416.2 H370.4 V411.59999999999997" fill="none" stroke="#fff" stroke-width="1" />
<text x="381.8" y="419.28" font-size="8" fill="#fff" textLength="9" lengthAdjust="spacingAndGlyphs" >SR</text>
<rect x="362.5" y="434.5" width="17" height="17" fill="#262626" stroke="#fff" stroke-width="1" shape-rendering="crispEdges" />
<line x1="370.5" y1="434" x2="370.5" y2="440" stroke="#fff" stroke-width="1"  shape-rendering="crispEdges"/>
<line x1="365" y1="440.5" x2="375" y2="440.5" stroke="#fff" stroke-width="1"  shape-rendering="crispEdges"/>
<line x1="365" y1="443.5" x2="375" y2="443.5" stroke="#fff" stroke-width="1"  shape-rendering="crispEdges"/>
<line x1="370.5" y1="444" x2="370.5" y2="449" stroke="#fff" stroke-width="1"  shape-rendering="crispEdges"/>
<text x="381.8" y="444.08" font-size="8" fill="#fff" textLength="13" lengthAdjust="spacingAndGlyphs" >SC2</text>
<line x1="454.5" y1="348" x2="454.5" y2="409" stroke="#fff" stroke-width="1"  shape-rendering="crispEdges"/>
<rect x="446.5" y="362.5" width="17" height="18" fill="#262626" stroke="#ff0000" stroke-width="1" shape-rendering="crispEdges" />
<line x1="454.5" y1="362" x2="454.5" y2="368" stroke="#ff0000" stroke-width="1"  shape-rendering="crispEdges"/>
<line x1="448.935" y1="364.478" x2="454.9" y2="374.798" stroke="#ff0000" stroke-width="1.1" />
<line x1="454.5" y1="375" x2="454.5" y2="380" stroke="#ff0000" stroke-width="1"  shape-rendering="crispEdges"/>
<line x1="453.117" y1="365.084" x2="457.283" y2="368.416" stroke="#ff0000" stroke-width="1" />
<line x1="453.117" y1="368.416" x2="457.283" y2="365.084" stroke="#ff0000" stroke-width="1" />
<text x="467.6" y="374.18" font-size="8" fill="#fff" textLength="15.5" lengthAdjust="spacingAndGlyphs" >52F1</text>
<circle cx="466" cy="388.8" r="4.6" fill="none" stroke="#fff" stroke-width="1.1" />
<text x="473.5" y="391.03" font-size="6.2" fill="#e8e8e8" textLength="17.5" lengthAdjust="spacingAndGlyphs" >過電流</text>
<polygon points="451.2,409 458.4,409 454.8,414.8" fill="#262626" stroke="#fff" stroke-width="1" />
<line x1="454.5" y1="415" x2="454.5" y2="433" stroke="#fff" stroke-width="1" stroke-dasharray="2.5 1.5" shape-rendering="crispEdges"/>
<rect x="435.5" y="433.5" width="40" height="16" fill="#262626" stroke="#fff" stroke-width="1" shape-rendering="crispEdges" />
<text x="455" y="443.46" font-size="6" fill="#f0f0f0" text-anchor="middle" textLength="33" lengthAdjust="spacingAndGlyphs" >低圧電灯盤1</text>
<line x1="532.5" y1="348" x2="532.5" y2="409" stroke="#fff" stroke-width="1"  shape-rendering="crispEdges"/>
<rect x="523.5" y="362.5" width="18" height="18" fill="#262626" stroke="#ff0000" stroke-width="1" shape-rendering="crispEdges" />
<line x1="532.5" y1="362" x2="532.5" y2="368" stroke="#ff0000" stroke-width="1"  shape-rendering="crispEdges"/>
<line x1="526.635" y1="364.478" x2="532.6" y2="374.798" stroke="#ff0000" stroke-width="1.1" />
<line x1="532.5" y1="375" x2="532.5" y2="380" stroke="#ff0000" stroke-width="1"  shape-rendering="crispEdges"/>
<line x1="530.817" y1="365.084" x2="534.983" y2="368.416" stroke="#ff0000" stroke-width="1" />
<line x1="530.817" y1="368.416" x2="534.983" y2="365.084" stroke="#ff0000" stroke-width="1" />
<text x="545.3" y="374.18" font-size="8" fill="#fff" textLength="15.5" lengthAdjust="spacingAndGlyphs" >52F2</text>
<circle cx="543.7" cy="388.8" r="4.6" fill="none" stroke="#fff" stroke-width="1.1" />
<text x="551.2" y="391.03" font-size="6.2" fill="#e8e8e8" textLength="17.5" lengthAdjust="spacingAndGlyphs" >過電流</text>
<polygon points="528.9,409 536.1,409 532.5,414.8" fill="#262626" stroke="#fff" stroke-width="1" />
<line x1="532.5" y1="415" x2="532.5" y2="433" stroke="#fff" stroke-width="1" stroke-dasharray="2.5 1.5" shape-rendering="crispEdges"/>
<rect x="512.5" y="433.5" width="39" height="16" fill="#262626" stroke="#fff" stroke-width="1" shape-rendering="crispEdges" />
<text x="531.85" y="443.46" font-size="6" fill="#f0f0f0" text-anchor="middle" textLength="33" lengthAdjust="spacingAndGlyphs" >低圧電灯盤2</text>
<line x1="609.5" y1="348" x2="609.5" y2="409" stroke="#fff" stroke-width="1" stroke-dasharray="2.5 1.5" shape-rendering="crispEdges"/>
<rect x="600.5" y="362.5" width="18" height="18" fill="#262626" stroke="#fff" stroke-width="1" shape-rendering="crispEdges" stroke-dasharray="2.2 1.6"/>
<line x1="609.5" y1="362" x2="609.5" y2="368" stroke="#fff" stroke-width="1" stroke-dasharray="2.2 1.6" shape-rendering="crispEdges"/>
<line x1="603.535" y1="364.478" x2="609.5" y2="374.798" stroke="#fff" stroke-width="1.1" />
<line x1="609.5" y1="375" x2="609.5" y2="380" stroke="#fff" stroke-width="1" stroke-dasharray="2.2 1.6" shape-rendering="crispEdges"/>
<line x1="607.717" y1="365.084" x2="611.883" y2="368.416" stroke="#fff" stroke-width="1" />
<line x1="607.717" y1="368.416" x2="611.883" y2="365.084" stroke="#fff" stroke-width="1" />
<polygon points="605.8,409 613,409 609.4,414.8" fill="#262626" stroke="#fff" stroke-width="1" />
<line x1="609.5" y1="415" x2="609.5" y2="433" stroke="#fff" stroke-width="1" stroke-dasharray="2.5 1.5" shape-rendering="crispEdges"/>
<rect x="590.5" y="433.5" width="38" height="16" fill="#262626" stroke="#fff" stroke-width="1" shape-rendering="crispEdges" stroke-dasharray="2.6 1.6"/>
<text x="609.4" y="443.46" font-size="6" fill="#f0f0f0" text-anchor="middle" textLength="12" lengthAdjust="spacingAndGlyphs" >予備</text>
<line x1="686.5" y1="348" x2="686.5" y2="409" stroke="#fff" stroke-width="1"  shape-rendering="crispEdges"/>
<rect x="677.5" y="362.5" width="18" height="18" fill="#262626" stroke="#ff0000" stroke-width="1" shape-rendering="crispEdges" />
<line x1="686.5" y1="362" x2="686.5" y2="368" stroke="#ff0000" stroke-width="1"  shape-rendering="crispEdges"/>
<line x1="680.535" y1="364.478" x2="686.5" y2="374.798" stroke="#ff0000" stroke-width="1.1" />
<line x1="686.5" y1="375" x2="686.5" y2="380" stroke="#ff0000" stroke-width="1"  shape-rendering="crispEdges"/>
<line x1="684.717" y1="365.084" x2="688.883" y2="368.416" stroke="#ff0000" stroke-width="1" />
<line x1="684.717" y1="368.416" x2="688.883" y2="365.084" stroke="#ff0000" stroke-width="1" />
<text x="699.2" y="374.18" font-size="8" fill="#fff" textLength="15.5" lengthAdjust="spacingAndGlyphs" >52F3</text>
<circle cx="697.6" cy="388.8" r="4.6" fill="none" stroke="#fff" stroke-width="1.1" />
<text x="705.1" y="391.03" font-size="6.2" fill="#e8e8e8" textLength="17.5" lengthAdjust="spacingAndGlyphs" >過電流</text>
<polygon points="682.8,409 690,409 686.4,414.8" fill="#262626" stroke="#fff" stroke-width="1" />
<line x1="686.5" y1="415" x2="686.5" y2="433" stroke="#fff" stroke-width="1" stroke-dasharray="2.5 1.5" shape-rendering="crispEdges"/>
<rect x="667.5" y="433.5" width="40" height="16" fill="#262626" stroke="#fff" stroke-width="1" shape-rendering="crispEdges" />
<text x="687.1" y="443.46" font-size="6" fill="#f0f0f0" text-anchor="middle" textLength="30" lengthAdjust="spacingAndGlyphs" >低圧動力盤</text>
<line x1="820.5" y1="101" x2="820.5" y2="456" stroke="#c8c8c8" stroke-width="1"  shape-rendering="crispEdges"/>
<rect x="821" y="101.5" width="612" height="19.5" fill="#dcdcdc" />
<line x1="821" y1="101.5" x2="1433" y2="101.5" stroke="#b4b4b4" stroke-width="1"  shape-rendering="crispEdges"/>
<text x="825" y="116.18" font-size="13" fill="#000" textLength="14.5" lengthAdjust="spacingAndGlyphs" >C2</text>
<line x1="1432.5" y1="101" x2="1432.5" y2="456" stroke="#b4b4b4" stroke-width="1"  shape-rendering="crispEdges"/>
<rect x="821.5" y="121" width="611" height="335" fill="#000" />
<defs>
<linearGradient id="cwall" x1="0" y1="0" x2="1" y2="0"><stop offset="0" stop-color="#a4a4a4"/><stop offset="0.5" stop-color="#a0a0a0"/><stop offset="0.85" stop-color="#939393"/><stop offset="1" stop-color="#8a8a8a"/></linearGradient>
<linearGradient id="cwallv" x1="0" y1="0" x2="0" y2="1"><stop offset="0" stop-color="#fff" stop-opacity="0.10"/><stop offset="1" stop-color="#000" stop-opacity="0.08"/></linearGradient>
<linearGradient id="ccyl" x1="0" y1="0" x2="1" y2="0"><stop offset="0" stop-color="#d2d2d8"/><stop offset="0.22" stop-color="#e2e2e8"/><stop offset="0.36" stop-color="#b4b4ba"/><stop offset="0.5" stop-color="#d0d0d6"/><stop offset="0.75" stop-color="#c6c6cc"/><stop offset="1" stop-color="#b2b2b8"/></linearGradient>
<linearGradient id="cpil" x1="0" y1="0" x2="1" y2="0"><stop offset="0" stop-color="#b0b0b0"/><stop offset="0.25" stop-color="#cccccc"/><stop offset="0.7" stop-color="#c4c4c4"/><stop offset="1" stop-color="#aaaaaa"/></linearGradient>
<linearGradient id="cchair" x1="0" y1="0" x2="0" y2="1"><stop offset="0" stop-color="#242424"/><stop offset="1" stop-color="#141414"/></linearGradient>
<filter id="cblur" x="-2%" y="-2%" width="104%" height="104%"><feGaussianBlur stdDeviation="0.5"/></filter>
<clipPath id="cclip"><rect x="902" y="121" width="447" height="335"/></clipPath>
</defs>
<g clip-path="url(#cclip)"><g filter="url(#cblur)">
<rect x="895" y="115" width="460" height="350" fill="#cfc7ba" />
<rect x="895" y="115" width="125" height="350" fill="url(#cwall)" />
<rect x="895" y="115" width="125" height="350" fill="url(#cwallv)" />
<rect x="1047" y="221" width="45" height="240" fill="#cec6b7" />
<rect x="1062" y="221" width="30" height="60" fill="#d6cec0" />
<polygon points="1019,221 1047.5,221 1050.5,330 1048,400 1041.5,456 1021,456" fill="url(#cpil)" />
<circle cx="1033.5" cy="347.5" r="2" fill="#222" />
<circle cx="1030.5" cy="244.5" r="2" fill="#333" />
<rect x="1016.5" y="115" width="76" height="106" fill="url(#ccyl)" />
<rect x="1018" y="218" width="75" height="3.5" fill="#a8aaa6" />
<circle cx="1015" cy="203" r="2.2" fill="#333" />
<rect x="1093" y="140" width="40" height="60" fill="#d6d2cc" />
<rect x="1094" y="150" width="22" height="45" fill="#e4e2e0" />
<rect x="1129" y="121" width="19" height="100" fill="#c8c6c8" />
<rect x="1131" y="121" width="3" height="95" fill="#e8e4f4" />
<rect x="1146" y="121" width="3" height="110" fill="#b8b8c0" />
<rect x="1150" y="121" width="44" height="14" fill="#3a3a36" />
<rect x="1152" y="135" width="15" height="30" fill="#2a2a2c" />
<rect x="1167" y="140" width="26" height="22" fill="#6a4a40" />
<rect x="1178" y="146" width="9" height="14" fill="#a03030" />
<rect x="1160" y="160" width="36" height="6" fill="#d0d0d4" />
<rect x="1151" y="166" width="45" height="20" fill="#4a4a48" />
<rect x="1194" y="121" width="3.2" height="140" fill="#6868b8" />
<rect x="1192" y="121" width="2" height="140" fill="#e8e8f8" />
<rect x="1187" y="185" width="3" height="40" fill="#9898c0" />
<rect x="1197" y="160" width="16" height="12" fill="#b8b6b4" />
<polygon points="1094,196 1126,189 1134,204 1168,222 1166,226 1094,222" fill="#9a9c9e" />
<polygon points="1134,204 1156,203 1170,221 1168,224" fill="#8a8478" />
<polygon points="1149,208 1162,203 1168,208 1160,215" fill="#d8d8d8" />
<rect x="1156" y="214" width="40" height="50" fill="#2c2c2e" />
<rect x="1160" y="234" width="34" height="3" fill="#b0b0b0" />
<rect x="1100" y="222" width="56" height="40" fill="#a8a49c" />
<rect x="1112" y="222" width="8" height="40" fill="#dcdad6" />
<rect x="1117" y="232" width="36" height="21" fill="#d2d2ce" />
<rect x="1125" y="245" width="5" height="6" fill="#222" />
<path d="M1149 228 C1156 235 1158 250 1162 262" fill="none" stroke="#7088b0" stroke-width="1.6" />
<path d="M1077 222 C1080 240 1090 245 1094 262" fill="none" stroke="#222" stroke-width="1" />
<rect x="1237" y="138" width="112" height="4.5" fill="#1e1e22" />
<rect x="1237" y="142.5" width="112" height="8.5" fill="#e4e2de" />
<rect x="1243" y="151" width="106" height="31" fill="#dad6ce" />
<rect x="1237" y="142" width="5" height="70" fill="#e8e8f0" />
<rect x="1234" y="142" width="3" height="70" fill="#484860" />
<rect x="1243" y="181" width="106" height="2" fill="#eeeeec" />
<rect x="1243" y="183" width="106" height="18" fill="#cac2b4" />
<path d="M1290 183 L1304 200 M1346 183 L1340 200 M1276 184 L1279 200" fill="none" stroke="#6a78a0" stroke-width="1.2" />
<rect x="1235" y="200.5" width="114" height="6.5" fill="#1a1a1c" />
<rect x="1243" y="207" width="106" height="4" fill="#d8d4c8" />
<polygon points="1197,214 1240,211 1349,209 1349,330 1262,330 1262,262 1205,262" fill="url(#cchair)" />
<polygon points="1206.5,222 1213,222 1220.5,260 1213,260" fill="#5e5e5e" />
<polygon points="1326,219 1337,219 1339,248 1333,261 1322.5,258" fill="#5c5c5c" />
<rect x="1262" y="262" width="87" height="56" fill="#1e1e20" />
<polygon points="1275,287 1299,287 1294,302 1273,302" fill="#404040" />
<polygon points="1313,287 1329,286 1319,300 1308.5,300" fill="#3c3c3c" />
<polygon points="1080,352 1262,317 1349,317 1349,412 1041,404" fill="#c6c7ba" />
<polygon points="1262,317 1349,317 1349,330 1262,330" fill="#c4c5b8" />
<polygon points="1066,372 1080,350 1082,392 1270,392 1270,398 1050,398" fill="#b4b5a8" />
<polygon points="1041,404 1349,411.5 1349,422 1041,415.5" fill="#e2dfb8" />
<polygon points="1041,415.5 1349,422 1349,445.5 1066,438.5 1066,456 1041,456" fill="#98a2ae" />
<polygon points="1041,415.5 1066,416 1066,456 1041,456" fill="#848c98" />
<polygon points="1066,438.5 1349,445.5 1349,456 1066,456" fill="#48423c" />
<rect x="1098" y="440" width="20" height="16" fill="#7a8088" />
<rect x="1130" y="441" width="90" height="15" fill="#2c2a28" />
<polygon points="1066,368 1078,349 1080,362 1070,378" fill="#4a4a4a" />
<path d="M1086 265 Q1086.5 261.5 1091 261.5 H1257 Q1262.5 261.5 1263 266 L1269 385 Q1269 390 1264 390 H1084 Q1079.5 390 1079.5 385 Z" fill="#f6f2f3" />
<polygon points="1097,268.5 1250.5,268.5 1255.5,371.5 1093,371.5" fill="#121414" />
<polygon points="1093,371.5 1255.5,371.5 1256,382.3 1092.5,382.3" fill="#f0a030" />
<rect x="1093.5" y="373" width="158" height="8.3" fill="#f8c850" />
<rect x="1210.5" y="374.3" width="35" height="7.2" fill="#38a838" />
<circle cx="1101" cy="272.5" r="0.9" fill="#30c040" />
<circle cx="1241" cy="272.5" r="0.9" fill="#30c040" />
<circle cx="1247" cy="272.5" r="0.9" fill="#30c040" />
<polygon points="1141,387 1146,387 1143,397 1138,396" fill="#333" />
<polygon points="1191,388 1196,387 1199,397 1194,398" fill="#333" />
<path d="M1086 322.5 H1077 C1058 323 1047 335 1043 356 C1040 380 1030 420 1019 458" fill="none" stroke="#f4f4f4" stroke-width="1.8" />
<rect x="1075" y="320.5" width="8" height="4" fill="#fff" />
<path d="M1274.5 393 C1275 384 1283 381 1291 381 C1300 381 1308 385 1308.5 394 C1308 402 1299 403.5 1291 403.5 C1283 403.5 1275 401 1274.5 393 Z" fill="#f4f4fa" />
<polygon points="1285,392 1303,391.5 1304.5,396.5 1286,397" fill="#3038a8" />
<path d="M1284 374 C1284 362 1302 362 1302.5 374 C1303 383 1300 386 1293 386 C1286 386 1284 383 1284 374 Z" fill="#c9a27c" />
<circle cx="1283.5" cy="341.5" r="5.6" fill="#d8b898" />
<circle cx="1283.8" cy="342" r="3.4" fill="#f0e4d8" />
<circle cx="1305.8" cy="341" r="5.6" fill="#d8b898" />
<circle cx="1305.5" cy="341.5" r="3.4" fill="#f0e4d8" />
<path d="M1281 352 C1281 338 1308 338 1308 352 C1308 363 1302 366 1294.5 366 C1287 366 1281 363 1281 352 Z" fill="#c8a07a" />
<circle cx="1290" cy="351.5" r="1" fill="#222" />
<circle cx="1302" cy="351.5" r="1" fill="#222" />
<circle cx="1296" cy="355" r="1.3" fill="#f4e8e0" />
<path d="M1291 357.5 Q1294 360 1296 357.5 Q1298.5 360 1301.5 357.5" fill="none" stroke="#222" stroke-width="0.8" />
</g>
<text x="1124" y="299.78" font-size="5.5" fill="#9af0a4" textLength="11" lengthAdjust="spacingAndGlyphs" font-weight="bold" >FRI</text>
<text x="1199" y="299.78" font-size="5.5" fill="#9af0a4" textLength="38" lengthAdjust="spacingAndGlyphs" font-weight="bold" >2021/02/05</text>
<text x="1123" y="336.2" font-size="44" fill="#9af0a4" stroke="#9af0a4" stroke-width="0.9" textLength="87.5" lengthAdjust="spacingAndGlyphs" filter="url(#cblur)">10:58</text>
<text x="1212.5" y="338.5" font-size="21" fill="#9af0a4" stroke="#9af0a4" stroke-width="0.5" textLength="29.5" lengthAdjust="spacingAndGlyphs" filter="url(#cblur)">:44</text>
<text x="1105" y="379.64" font-size="6.5" fill="#a05010" textLength="70" lengthAdjust="spacingAndGlyphs" >Voice Calc - Voice Calculator</text>
<text x="1228" y="380.16" font-size="6" fill="#fff" text-anchor="middle" textLength="14" lengthAdjust="spacingAndGlyphs" font-weight="bold" >Install</text>
<text x="916.3" y="143.2" font-size="14" style="font-family:'Liberation Mono', 'DejaVu Sans Mono', monospace" fill="#fff" stroke="#000" stroke-width="2" paint-order="stroke" stroke-linejoin="round" textLength="84" lengthAdjust="spacingAndGlyphs">2021/02/05</text>
<text x="1017.5" y="143.2" font-size="14" style="font-family:'Liberation Mono', 'DejaVu Sans Mono', monospace" fill="#fff" stroke="#000" stroke-width="2" paint-order="stroke" stroke-linejoin="round" textLength="66" lengthAdjust="spacingAndGlyphs">10:58:45</text>
</g>
<rect x="209" y="456.5" width="612" height="19.5" fill="#dcdcdc" />
<line x1="209" y1="456.5" x2="821" y2="456.5" stroke="#b4b4b4" stroke-width="1"  shape-rendering="crispEdges"/>
<text x="213" y="471.00" font-size="12.5" fill="#000" textLength="60" lengthAdjust="spacingAndGlyphs" >トレンドグラフ</text>
<line x1="209.5" y1="456" x2="209.5" y2="811" stroke="#b4b4b4" stroke-width="1"  shape-rendering="crispEdges"/>
<line x1="820.5" y1="456" x2="820.5" y2="811" stroke="#c8c8c8" stroke-width="1"  shape-rendering="crispEdges"/>
<line x1="209" y1="811.5" x2="1433" y2="811.5" stroke="#b4b4b4" stroke-width="1"  shape-rendering="crispEdges"/>
<rect x="217.5" y="484.5" width="179" height="27" fill="#fff" stroke="#acacac" stroke-width="1" shape-rendering="crispEdges" />
<rect x="370" y="485" width="26" height="26" fill="#f0f0f0" />
<polygon points="378.7,494 388.1,494 383.4,502.8" fill="#6e6e6e" />
<text x="219.5" y="502.86" font-size="13.5" fill="#000" textLength="113" lengthAdjust="spacingAndGlyphs" >電気-1号線-Group01</text>
<rect x="401.5" y="484.5" width="27" height="27" fill="#f0f0f0" stroke="#adadad" stroke-width="1" shape-rendering="crispEdges" />
<circle cx="410.4" cy="493.5" r="5.6" fill="none" stroke="#000" stroke-width="1.3" />
<line x1="415.4" y1="498.9" x2="422.8" y2="505.7" stroke="#000" stroke-width="2.5" stroke-linecap="round"/>
<rect x="433.5" y="484.5" width="27" height="27" fill="#f0f0f0" stroke="#adadad" stroke-width="1" shape-rendering="crispEdges" />
<text x="447" y="502.68" font-size="13" fill="#000" text-anchor="middle" textLength="18" lengthAdjust="spacingAndGlyphs" >&lt; &lt;</text>
<rect x="465.5" y="484.5" width="27" height="27" fill="#f0f0f0" stroke="#adadad" stroke-width="1" shape-rendering="crispEdges" />
<text x="479" y="502.68" font-size="13" fill="#000" text-anchor="middle" textLength="18" lengthAdjust="spacingAndGlyphs" >&gt; &gt;</text>
<rect x="497.5" y="484.5" width="179" height="27" fill="#fff" stroke="#acacac" stroke-width="1" shape-rendering="crispEdges" />
<rect x="650" y="485" width="26" height="26" fill="#f0f0f0" />
<polygon points="658.8,494 668.2,494 663.5,502.8" fill="#6e6e6e" />
<text x="500" y="502.86" font-size="13.5" fill="#000" textLength="58" lengthAdjust="spacingAndGlyphs" >1号線 電圧</text>
<rect x="784.5" y="484.5" width="27" height="27" fill="#f0f0f0" stroke="#adadad" stroke-width="1" shape-rendering="crispEdges" />
<path d="M805.60 496.53 L807.38 497.12 L807.38 498.48 L805.60 499.07 L805.16 500.70 L806.41 502.10 L805.72 503.28 L803.89 502.90 L802.70 504.09 L803.08 505.92 L801.90 506.61 L800.50 505.36 L798.87 505.80 L798.28 507.58 L796.92 507.58 L796.33 505.80 L794.70 505.36 L793.30 506.61 L792.12 505.92 L792.50 504.09 L791.31 502.90 L789.48 503.28 L788.79 502.10 L790.04 500.70 L789.60 499.07 L787.82 498.48 L787.82 497.12 L789.60 496.53 L790.04 494.90 L788.79 493.50 L789.48 492.32 L791.31 492.70 L792.50 491.51 L792.12 489.68 L793.30 488.99 L794.70 490.24 L796.33 489.80 L796.92 488.02 L798.28 488.02 L798.87 489.80 L800.50 490.24 L801.90 488.99 L803.08 489.68 L802.70 491.51 L803.89 492.70 L805.72 492.32 L806.41 493.50 L805.16 494.90 Z M803.20 497.80 A5.6 5.6 0 1 0 792.00 497.80 A5.6 5.6 0 1 0 803.20 497.80 Z" fill="#000" fill-rule="evenodd"/>
<rect x="217" y="516" width="595" height="255" fill="#000" />
<rect x="286.6" y="661.48" width="447.4" height="17.68" fill="#808080" />
<rect x="309.45" y="661.48" width="38.845" height="17.68" fill="#008000" />
<rect x="385.617" y="661.48" width="38.845" height="17.68" fill="#008000" />
<rect x="461.783" y="661.48" width="38.845" height="17.68" fill="#008000" />
<rect x="537.95" y="661.48" width="38.845" height="17.68" fill="#008000" />
<rect x="614.117" y="661.48" width="38.845" height="17.68" fill="#008000" />
<rect x="690.283" y="661.48" width="38.845" height="17.68" fill="#008000" />
<line x1="332.5" y1="555" x2="332.5" y2="732" stroke="#9a9a9a" stroke-width="1" stroke-dasharray="1 2" shape-rendering="crispEdges"/>
<line x1="378.5" y1="555" x2="378.5" y2="732" stroke="#9a9a9a" stroke-width="1" stroke-dasharray="1 2" shape-rendering="crispEdges"/>
<line x1="423.5" y1="555" x2="423.5" y2="732" stroke="#9a9a9a" stroke-width="1" stroke-dasharray="1 2" shape-rendering="crispEdges"/>
<line x1="469.5" y1="555" x2="469.5" y2="732" stroke="#9a9a9a" stroke-width="1" stroke-dasharray="1 2" shape-rendering="crispEdges"/>
<line x1="515.5" y1="555" x2="515.5" y2="732" stroke="#9a9a9a" stroke-width="1" stroke-dasharray="1 2" shape-rendering="crispEdges"/>
<line x1="560.5" y1="555" x2="560.5" y2="732" stroke="#9a9a9a" stroke-width="1" stroke-dasharray="1 2" shape-rendering="crispEdges"/>
<line x1="606.5" y1="555" x2="606.5" y2="732" stroke="#9a9a9a" stroke-width="1" stroke-dasharray="1 2" shape-rendering="crispEdges"/>
<line x1="652.5" y1="555" x2="652.5" y2="732" stroke="#9a9a9a" stroke-width="1" stroke-dasharray="1 2" shape-rendering="crispEdges"/>
<line x1="697.5" y1="555" x2="697.5" y2="732" stroke="#9a9a9a" stroke-width="1" stroke-dasharray="1 2" shape-rendering="crispEdges"/>
<line x1="287" y1="714.5" x2="744" y2="714.5" stroke="#9a9a9a" stroke-width="1" stroke-dasharray="1 2" shape-rendering="crispEdges"/>
<line x1="287" y1="696.5" x2="744" y2="696.5" stroke="#9a9a9a" stroke-width="1" stroke-dasharray="1 2" shape-rendering="crispEdges"/>
<line x1="287" y1="679.5" x2="744" y2="679.5" stroke="#9a9a9a" stroke-width="1" stroke-dasharray="1 2" shape-rendering="crispEdges"/>
<line x1="287" y1="661.5" x2="744" y2="661.5" stroke="#9a9a9a" stroke-width="1" stroke-dasharray="1 2" shape-rendering="crispEdges"/>
<line x1="287" y1="643.5" x2="744" y2="643.5" stroke="#9a9a9a" stroke-width="1" stroke-dasharray="1 2" shape-rendering="crispEdges"/>
<line x1="287" y1="626.5" x2="744" y2="626.5" stroke="#9a9a9a" stroke-width="1" stroke-dasharray="1 2" shape-rendering="crispEdges"/>
<line x1="287" y1="608.5" x2="744" y2="608.5" stroke="#9a9a9a" stroke-width="1" stroke-dasharray="1 2" shape-rendering="crispEdges"/>
<line x1="287" y1="590.5" x2="744" y2="590.5" stroke="#9a9a9a" stroke-width="1" stroke-dasharray="1 2" shape-rendering="crispEdges"/>
<line x1="287" y1="573.5" x2="744" y2="573.5" stroke="#9a9a9a" stroke-width="1" stroke-dasharray="1 2" shape-rendering="crispEdges"/>
<rect x="287.2" y="720" width="2.6" height="11" fill="#00ff00" />
<rect x="294.73" y="720" width="2.6" height="11" fill="#00ff00" />
<rect x="302.26" y="720" width="2.6" height="11" fill="#00ff00" />
<rect x="309.79" y="720" width="2.6" height="11" fill="#00ff00" />
<rect x="317.32" y="720" width="2.6" height="11" fill="#00ff00" />
<rect x="324.85" y="720" width="2.6" height="11" fill="#00ff00" />
<rect x="332.38" y="720" width="2.6" height="11" fill="#00ff00" />
<rect x="339.91" y="720" width="2.6" height="11" fill="#00ff00" />
<rect x="347.44" y="720" width="2.6" height="11" fill="#00ff00" />
<rect x="354.97" y="720" width="2.6" height="11" fill="#00ff00" />
<rect x="362.5" y="720" width="2.6" height="11" fill="#00ff00" />
<rect x="370.03" y="720" width="2.6" height="11" fill="#00ff00" />
<rect x="377.56" y="720" width="2.6" height="11" fill="#00ff00" />
<rect x="385.09" y="720" width="2.6" height="11" fill="#00ff00" />
<rect x="392.62" y="720" width="2.6" height="11" fill="#00ff00" />
<rect x="400.15" y="720" width="2.6" height="11" fill="#00ff00" />
<rect x="407.68" y="720" width="2.6" height="11" fill="#00ff00" />
<rect x="415.21" y="720" width="2.6" height="11" fill="#00ff00" />
<rect x="422.74" y="720" width="2.6" height="11" fill="#00ff00" />
<rect x="430.27" y="720" width="2.6" height="11" fill="#00ff00" />
<rect x="437.8" y="720" width="2.6" height="11" fill="#00ff00" />
<rect x="445.33" y="720" width="2.6" height="11" fill="#00ff00" />
<rect x="452.86" y="720" width="2.6" height="11" fill="#00ff00" />
<rect x="460.39" y="720" width="2.6" height="11" fill="#00ff00" />
<rect x="467.92" y="720" width="2.6" height="11" fill="#00ff00" />
<rect x="475.45" y="720" width="2.6" height="11" fill="#00ff00" />
<rect x="482.98" y="720" width="2.6" height="11" fill="#00ff00" />
<rect x="490.51" y="720" width="2.6" height="11" fill="#00ff00" />
<rect x="498.04" y="720" width="2.6" height="11" fill="#00ff00" />
<rect x="505.57" y="720" width="2.6" height="11" fill="#00ff00" />
<rect x="513.1" y="720" width="2.6" height="11" fill="#00ff00" />
<rect x="520.63" y="720" width="2.6" height="11" fill="#00ff00" />
<rect x="528.16" y="720" width="2.6" height="11" fill="#00ff00" />
<rect x="535.69" y="720" width="2.6" height="11" fill="#00ff00" />
<rect x="543.22" y="720" width="2.6" height="11" fill="#00ff00" />
<rect x="550.75" y="720" width="2.6" height="11" fill="#00ff00" />
<rect x="558.28" y="720" width="2.6" height="11" fill="#00ff00" />
<rect x="565.81" y="720" width="2.6" height="11" fill="#00ff00" />
<rect x="573.34" y="720" width="2.6" height="11" fill="#00ff00" />
<rect x="580.87" y="720" width="2.6" height="11" fill="#00ff00" />
<rect x="588.4" y="720" width="2.6" height="11" fill="#00ff00" />
<rect x="595.93" y="720" width="2.6" height="11" fill="#00ff00" />
<rect x="603.46" y="720" width="2.6" height="11" fill="#00ff00" />
<rect x="610.99" y="720" width="2.6" height="11" fill="#00ff00" />
<rect x="618.52" y="720" width="2.6" height="11" fill="#00ff00" />
<rect x="626.05" y="720" width="2.6" height="11" fill="#00ff00" />
<rect x="633.58" y="720" width="2.6" height="11" fill="#00ff00" />
<rect x="641.11" y="720" width="2.6" height="11" fill="#00ff00" />
<rect x="648.64" y="720" width="2.6" height="11" fill="#00ff00" />
<rect x="656.17" y="720" width="2.6" height="11" fill="#00ff00" />
<rect x="663.7" y="720" width="2.6" height="11" fill="#00ff00" />
<rect x="671.23" y="720" width="2.6" height="11" fill="#00ff00" />
<rect x="678.76" y="720" width="2.6" height="11" fill="#00ff00" />
<rect x="686.29" y="720" width="2.6" height="11" fill="#00ff00" />
<rect x="693.82" y="720" width="2.6" height="11" fill="#00ff00" />
<rect x="701.35" y="720" width="2.6" height="11" fill="#00ff00" />
<rect x="708.88" y="720" width="2.6" height="11" fill="#00ff00" />
<rect x="716.41" y="720" width="2.6" height="11" fill="#00ff00" />
<rect x="723.94" y="720" width="2.6" height="11" fill="#00ff00" />
<rect x="731.47" y="720" width="2.6" height="11" fill="#00ff00" />
<line x1="287" y1="717.5" x2="734" y2="717.5" stroke="#ff0000" stroke-width="1"  shape-rendering="crispEdges"/>
<clipPath id="tclip"><rect x="286.6" y="555.4" width="457.0" height="176.80000000000007"/></clipPath>
<g clip-path="url(#tclip)">
<polyline points="286.6,625.9 311.0,625.9 316.3,627.9 372.7,627.9 378.0,629.7 420.7,629.7 426.7,631.1 473.2,631.1 479.3,632.7 522.7,632.7 528.8,634.3 580.6,634.3 586.7,635.7 626.3,635.7 632.4,637.3 667.4,637.3 673.5,638.8 702.5,638.8 708.6,641.0 720.8,641.0 725.3,642.4 736.0,642.4" fill="none" stroke="#00e8f0" stroke-width="1.2" />
<polyline points="286.6,609.3 309.8,609.3 309.8,591.7 333.3,591.7 333.3,609.3 355.8,609.3 355.8,591.7 378.3,591.7 378.3,609.3 401.7,609.3 401.7,591.7 424.5,591.7 424.5,609.3 446.7,609.3 446.7,591.7 469.8,591.7 469.8,609.3 492.8,609.3 492.8,591.7 515.4,591.7 515.4,609.3 538.2,609.3 538.2,591.7 561.0,591.7 561.0,609.3 584.0,609.3 584.0,591.7 606.7,591.7 606.7,609.3 629.5,609.3 629.5,591.7 652.3,591.7 652.3,609.3 675.0,609.3 675.0,591.7 698.0,591.7 698.0,609.3 720.8,609.3 720.8,591.7 734.0,591.7" fill="none" stroke="#f09048" stroke-width="1.3" />
<polyline points="286.6,575.0 290.3,572.0 294.1,569.2 297.8,566.6 301.5,564.4 305.2,562.5 309.0,560.9 312.7,559.6 316.4,558.6 320.2,558.1 323.9,558.1 327.6,558.1 331.3,558.1 335.1,558.5 338.8,559.4 342.5,560.7 346.3,562.3 350.0,564.1 353.7,566.3 357.4,568.8 361.2,571.6 364.9,574.6 368.6,577.9 372.4,581.4 376.1,585.2 379.8,589.2 383.5,593.4 387.3,597.8 391.0,602.3 394.7,607.1 398.5,611.9 402.2,616.9 405.9,622.0 409.6,627.2 413.4,632.4 417.1,637.7 420.8,643.0 424.5,648.3 428.3,653.6 432.0,658.9 435.7,664.1 439.5,669.3 443.2,674.3 446.9,679.2 450.6,684.1 454.4,688.7 458.1,693.2 461.8,697.6 465.6,701.7 469.3,705.6 473.0,709.3 476.7,712.7 480.5,715.9 484.2,718.9 487.9,721.5 491.7,723.9 495.4,725.9 499.1,727.7 502.8,729.2 506.6,730.3 510.3,731.2 514.0,731.7 517.8,731.8 521.5,731.7 525.2,731.2 528.9,730.5 532.7,729.3 536.4,727.9 540.1,726.2 543.9,724.2 547.6,721.8 551.3,719.2 555.0,716.3 558.8,713.2 562.5,709.7 566.2,706.1 570.0,702.2 573.7,698.1 577.4,693.8 581.1,689.3 584.9,684.7 588.6,679.9 592.3,675.0 596.1,669.9 599.8,664.8 603.5,659.6 607.2,654.3 611.0,649.0 614.7,643.7 618.4,638.4 622.2,633.1 625.9,627.8 629.6,622.7 633.3,617.6 637.1,612.6 640.8,607.7 644.5,602.9 648.2,598.4 652.0,593.9 655.7,589.7 659.4,585.7 663.2,581.9 666.9,578.3 670.6,575.0 674.3,571.9 678.1,569.1 681.8,566.6 685.5,564.4 689.3,562.5 693.0,560.9 696.7,559.6 700.4,558.6 704.2,558.1 707.9,558.1 711.6,558.1 715.4,558.1 719.1,558.5 722.8,559.4 726.5,560.7 730.3,562.3 734.0,564.2" fill="none" stroke="#fff" stroke-width="1.1" />
<polyline points="286.6,721.6 290.3,720.4 294.1,719.2 297.8,717.8 301.5,716.5 305.2,715.0 309.0,713.5 312.7,711.9 316.4,710.2 320.2,708.5 323.9,706.7 327.6,704.9 331.3,703.0 335.1,701.0 338.8,699.0 342.5,697.0 346.3,694.8 350.0,692.7 353.7,690.5 357.4,688.2 361.2,685.9 364.9,683.6 368.6,681.2 372.4,678.8 376.1,676.4 379.8,673.9 383.5,671.4 387.3,668.9 391.0,666.3 394.7,663.7 398.5,661.2 402.2,658.5 405.9,655.9 409.6,653.3 413.4,650.7 417.1,648.0 420.8,645.4 424.5,642.7 428.3,640.0 432.0,637.4 435.7,634.8 439.5,632.1 443.2,629.5 446.9,626.9 450.6,624.3 454.4,621.7 458.1,619.2 461.8,616.6 465.6,614.1 469.3,611.6 473.0,609.2 476.7,606.8 480.5,604.4 484.2,602.1 487.9,599.8 491.7,597.5 495.4,595.3 499.1,593.1 502.8,591.0 506.6,588.9 510.3,586.9 514.0,584.9 517.8,583.0 521.5,581.2 525.2,579.4 528.9,577.7 532.7,576.0 536.4,574.4 540.1,572.9 543.9,571.4 547.6,570.0 551.3,568.7 555.0,567.4 558.8,566.2 562.5,565.1 566.2,564.1 570.0,563.1 573.7,562.2 577.4,561.4 581.1,560.7 584.9,560.0 588.6,559.4 592.3,559.0 596.1,558.5 599.8,558.2 603.5,558.0 607.2,557.8 611.0,557.7 614.7,557.7 618.4,557.8 622.2,557.9 625.9,558.2 629.6,558.5 633.3,558.9 637.1,559.4 640.8,560.0 644.5,560.6 648.2,561.3 652.0,562.1 655.7,563.0 659.4,564.0 663.2,565.0 666.9,566.1 670.6,567.3 674.3,568.5 678.1,569.9 681.8,571.3 685.5,572.7 689.3,574.3 693.0,575.8 696.7,577.5 700.4,579.2 704.2,581.0 707.9,582.9 711.6,584.8 715.4,586.7 719.1,588.7 722.8,590.8 726.5,592.9 730.3,595.1 734.0,597.3" fill="none" stroke="#f0f000" stroke-width="1.1" />
<polyline points="279.9,704.9 287.5,734.7 295.1,731.2 302.7,695.8 310.4,642.1 318.0,590.7 325.6,561.5 333.2,565.7 340.8,601.6 348.5,655.5 356.1,706.6 363.7,735.2 371.3,730.3 378.9,693.9 386.6,639.8 394.2,589.0 401.8,561.0 409.4,566.5 417.0,603.5 424.7,657.7 432.3,708.2 439.9,735.7 447.5,729.5 455.1,692.0 462.8,637.6 470.4,587.4 478.0,560.5 485.6,567.5 493.2,605.4 500.9,659.9 508.5,709.9 516.1,736.1 523.7,728.5 531.3,690.0 539.0,635.4 546.6,585.8 554.2,560.2 561.8,568.4 569.4,607.4 577.1,662.1 584.7,711.4 592.3,736.5 599.9,727.5 607.5,688.0 615.2,633.3 622.8,584.2 630.4,559.8 638.0,569.4 645.6,609.4 653.3,664.3 660.9,713.0 668.5,736.8 676.1,726.5 683.7,686.0 691.4,631.1 699.0,582.7 706.6,559.5 714.2,570.5 721.8,611.4 729.5,666.5 734.0,697.3" fill="none" stroke="#00ff00" stroke-width="1.1" />
</g>
<rect x="286.5" y="555.5" width="457" height="177" fill="none" stroke="#8c8c8c" stroke-width="1" shape-rendering="crispEdges" />
<line x1="309.5" y1="555" x2="309.5" y2="732" stroke="#ff0000" stroke-width="1"  shape-rendering="crispEdges"/>
<polygon points="303.5,555.8 314.9,555.8 309.2,565.8" fill="#ff0000" />
<polygon points="303.5,732.2 314.9,732.2 309.2,721.8" fill="#ff0000" />
<line x1="719.5" y1="555" x2="719.5" y2="732" stroke="#ff0000" stroke-width="1"  shape-rendering="crispEdges"/>
<polygon points="713.6,555.8 725,555.8 719.3,565.8" fill="#ff0000" />
<polygon points="713.6,732.2 725,732.2 719.3,721.8" fill="#ff0000" />
<path d="M762 556 H750.5 V731.6 H763" fill="none" stroke="#00ff00" stroke-width="1.2" />
<text x="279.5" y="736.18" font-size="13" fill="#00ff00" text-anchor="end" textLength="7" lengthAdjust="spacingAndGlyphs" >0</text>
<text x="279.5" y="718.80" font-size="13" fill="#00ff00" text-anchor="end" textLength="13.5" lengthAdjust="spacingAndGlyphs" >10</text>
<text x="279.5" y="701.42" font-size="13" fill="#00ff00" text-anchor="end" textLength="13.5" lengthAdjust="spacingAndGlyphs" >20</text>
<text x="279.5" y="684.04" font-size="13" fill="#00ff00" text-anchor="end" textLength="13.5" lengthAdjust="spacingAndGlyphs" >30</text>
<text x="279.5" y="666.66" font-size="13" fill="#00ff00" text-anchor="end" textLength="13.5" lengthAdjust="spacingAndGlyphs" >40</text>
<text x="279.5" y="649.28" font-size="13" fill="#00ff00" text-anchor="end" textLength="13.5" lengthAdjust="spacingAndGlyphs" >50</text>
<text x="279.5" y="631.90" font-size="13" fill="#00ff00" text-anchor="end" textLength="13.5" lengthAdjust="spacingAndGlyphs" >60</text>
<text x="279.5" y="614.52" font-size="13" fill="#00ff00" text-anchor="end" textLength="13.5" lengthAdjust="spacingAndGlyphs" >70</text>
<text x="279.5" y="597.14" font-size="13" fill="#00ff00" text-anchor="end" textLength="13.5" lengthAdjust="spacingAndGlyphs" >80</text>
<text x="279.5" y="579.76" font-size="13" fill="#00ff00" text-anchor="end" textLength="13.5" lengthAdjust="spacingAndGlyphs" >90</text>
<text x="279.5" y="562.38" font-size="13" fill="#00ff00" text-anchor="end" textLength="20.5" lengthAdjust="spacingAndGlyphs" >100</text>
<text transform="translate(231,644) rotate(-90)" font-size="12" fill="#00ff00" text-anchor="middle" textLength="88" lengthAdjust="spacingAndGlyphs">1号線 電圧 [ V ]</text>
<text x="309" y="532.68" font-size="13" fill="#00ff00" text-anchor="middle" textLength="65" lengthAdjust="spacingAndGlyphs" >2021/02/05</text>
<text x="309" y="547.18" font-size="13" fill="#00ff00" text-anchor="middle" textLength="50.5" lengthAdjust="spacingAndGlyphs" >10:57:47</text>
<text x="719" y="532.68" font-size="13" fill="#00ff00" text-anchor="middle" textLength="65" lengthAdjust="spacingAndGlyphs" >2021/02/05</text>
<text x="719" y="547.18" font-size="13" fill="#00ff00" text-anchor="middle" textLength="50.5" lengthAdjust="spacingAndGlyphs" >10:58:41</text>
<text x="287.2" y="750.18" font-size="13" fill="#00ff00" text-anchor="middle" textLength="65" lengthAdjust="spacingAndGlyphs" >2021/02/05</text>
<text x="287.2" y="765.38" font-size="13" fill="#00ff00" text-anchor="middle" textLength="50.5" lengthAdjust="spacingAndGlyphs" >10:57:45</text>
<text x="378.2" y="750.18" font-size="13" fill="#00ff00" text-anchor="middle" textLength="65" lengthAdjust="spacingAndGlyphs" >2021/02/05</text>
<text x="378.2" y="765.38" font-size="13" fill="#00ff00" text-anchor="middle" textLength="50.5" lengthAdjust="spacingAndGlyphs" >10:57:57</text>
<text x="469.2" y="750.18" font-size="13" fill="#00ff00" text-anchor="middle" textLength="65" lengthAdjust="spacingAndGlyphs" >2021/02/05</text>
<text x="469.2" y="765.38" font-size="13" fill="#00ff00" text-anchor="middle" textLength="50.5" lengthAdjust="spacingAndGlyphs" >10:58:09</text>
<text x="560.2" y="750.18" font-size="13" fill="#00ff00" text-anchor="middle" textLength="65" lengthAdjust="spacingAndGlyphs" >2021/02/05</text>
<text x="560.2" y="765.38" font-size="13" fill="#00ff00" text-anchor="middle" textLength="50.5" lengthAdjust="spacingAndGlyphs" >10:58:21</text>
<text x="651.2" y="750.18" font-size="13" fill="#00ff00" text-anchor="middle" textLength="65" lengthAdjust="spacingAndGlyphs" >2021/02/05</text>
<text x="651.2" y="765.38" font-size="13" fill="#00ff00" text-anchor="middle" textLength="50.5" lengthAdjust="spacingAndGlyphs" >10:58:33</text>
<text x="742.2" y="750.18" font-size="13" fill="#00ff00" text-anchor="middle" textLength="65" lengthAdjust="spacingAndGlyphs" >2021/02/05</text>
<text x="742.2" y="765.38" font-size="13" fill="#00ff00" text-anchor="middle" textLength="50.5" lengthAdjust="spacingAndGlyphs" >10:58:45</text>
<rect x="217.5" y="775.5" width="27" height="27" fill="#f0f0f0" stroke="#adadad" stroke-width="1" shape-rendering="crispEdges" />
<rect x="249.5" y="775.5" width="27" height="27" fill="#f0f0f0" stroke="#adadad" stroke-width="1" shape-rendering="crispEdges" />
<rect x="281.5" y="775.5" width="27" height="27" fill="#f0f0f0" stroke="#adadad" stroke-width="1" shape-rendering="crispEdges" />
<rect x="313.5" y="775.5" width="27" height="27" fill="#f0f0f0" stroke="#adadad" stroke-width="1" shape-rendering="crispEdges" />
<rect x="345.5" y="775.5" width="27" height="27" fill="#f0f0f0" stroke="#adadad" stroke-width="1" shape-rendering="crispEdges" />
<rect x="377.5" y="775.5" width="27" height="27" fill="#f0f0f0" stroke="#adadad" stroke-width="1" shape-rendering="crispEdges" />
<rect x="409.5" y="775.5" width="27" height="27" fill="#f0f0f0" stroke="#adadad" stroke-width="1" shape-rendering="crispEdges" />
<polygon points="230.75,783 230.75,795 222.25,789" fill="#787878" />
<polygon points="239.25,783 239.25,795 230.75,789" fill="#787878" />
<polygon points="266.5,783 266.5,795 258.5,789" fill="#787878" />
<polygon points="291.5,783 291.5,795 299.5,789" fill="#787878" />
<polygon points="318.75,783 318.75,795 327.25,789" fill="#787878" />
<polygon points="327.25,783 327.25,795 335.75,789" fill="#787878" />
<polygon points="350,782.5 350,795.5 359,789" fill="#000" />
<polygon points="368,782.5 368,795.5 359,789" fill="#000" />
<polygon points="389.75,782.5 389.75,795.5 381.25,789" fill="#000" />
<polygon points="392.25,782.5 392.25,795.5 400.75,789" fill="#000" />
<polygon points="420.5,782.5 420.5,795.5 412.5,789" fill="#000" />
<polygon points="425.5,782.5 425.5,795.5 433.5,789" fill="#000" />
<line x1="412.5" y1="781" x2="412.5" y2="797" stroke="#000" stroke-width="1.6" />
<line x1="433.5" y1="781" x2="433.5" y2="797" stroke="#000" stroke-width="1.6" />
<rect x="528.5" y="775.5" width="27" height="27" fill="#f0f0f0" stroke="#adadad" stroke-width="1" shape-rendering="crispEdges" />
<path d="M534.5 788 A7.5 7.5 0 0 1 548 784" fill="none" stroke="#666" stroke-width="1.8" />
<polygon points="550.5,780 550.5,786.5 544.5,786" fill="#666" />
<path d="M549.5 790 A7.5 7.5 0 0 1 536 794.5" fill="none" stroke="#666" stroke-width="1.8" />
<polygon points="533.5,798.5 533.5,792 539.5,792.5" fill="#666" />
<rect x="560.5" y="776" width="166.5" height="26.5" fill="#000" />
<text x="644" y="794.36" font-size="13.5" fill="#fff" text-anchor="middle" textLength="122" lengthAdjust="spacingAndGlyphs" >2021/02/05 10:57:45</text>
<rect x="732.8" y="776" width="79" height="26.5" fill="#000" />
<text x="772" y="794.36" font-size="13.5" fill="#fff" text-anchor="middle" textLength="30.5" lengthAdjust="spacingAndGlyphs" >1分間</text>
<rect x="821" y="456.5" width="612" height="19.5" fill="#dcdcdc" />
<line x1="821" y1="456.5" x2="1433" y2="456.5" stroke="#b4b4b4" stroke-width="1"  shape-rendering="crispEdges"/>
<text x="825" y="470.82" font-size="12" fill="#000" textLength="35.5" lengthAdjust="spacingAndGlyphs" >計器類</text>
<line x1="1432.5" y1="456" x2="1432.5" y2="811" stroke="#b4b4b4" stroke-width="1"  shape-rendering="crispEdges"/>
<rect x="869.5" y="480.5" width="166" height="326" fill="#f0f0f0" stroke="#adadad" stroke-width="1" shape-rendering="crispEdges" />
<rect x="874.2" y="484.2" width="154.6" height="15.3" fill="#c0c0c0" />
<text x="951.5" y="494.38" font-size="6.2" fill="#222" text-anchor="middle" textLength="23.5" lengthAdjust="spacingAndGlyphs" >運転操作</text>
<path d="M878 511.3 H919.5999999999999 L920.8 552.0 A21.4 21.4 0 0 1 878 552.0 Z" fill="#f4f4f4" stroke="#000" stroke-width="1.1" />
<text x="898.9" y="525.13" font-size="6.2" fill="#333" text-anchor="middle" textLength="24" lengthAdjust="spacingAndGlyphs" >運転状態</text>
<circle cx="898.9" cy="551.6" r="18" fill="#f8f8f8" stroke="#9a9a9a" stroke-width="0.8" />
<circle cx="898.9" cy="551.6" r="15.6" fill="#00ff00" stroke="#1a1a1a" stroke-width="0.8" />
<circle cx="898.9" cy="551.6" r="11.8" fill="none" stroke="#a0ffa0" stroke-width="0.9" />
<circle cx="898.9" cy="551.6" r="10.2" fill="none" stroke="#a0ffa0" stroke-width="0.7" />
<path d="M931 511.3 H972.5999999999999 L973.8 552.0 A21.4 21.4 0 0 1 931 552.0 Z" fill="#f4f4f4" stroke="#000" stroke-width="1.1" />
<text x="952" y="525.13" font-size="6.2" fill="#333" text-anchor="middle" textLength="12" lengthAdjust="spacingAndGlyphs" >運転</text>
<circle cx="952" cy="551.6" r="18" fill="#f8f8f8" stroke="#9a9a9a" stroke-width="0.8" />
<circle cx="952" cy="551.6" r="15.6" fill="#800000" stroke="#1a1a1a" stroke-width="0.8" />
<path d="M982 511.3 H1023.5999999999999 L1024.8 552.0 A21.4 21.4 0 0 1 982 552.0 Z" fill="#f4f4f4" stroke="#000" stroke-width="1.1" />
<text x="1003.8" y="525.13" font-size="6.2" fill="#333" text-anchor="middle" textLength="12" lengthAdjust="spacingAndGlyphs" >停止</text>
<circle cx="1003.8" cy="551.6" r="18" fill="#f8f8f8" stroke="#9a9a9a" stroke-width="0.8" />
<circle cx="1003.8" cy="551.6" r="15.6" fill="#008000" stroke="#1a1a1a" stroke-width="0.8" />
<rect x="874.2" y="579.2" width="154.6" height="15.4" fill="#c0c0c0" />
<text x="951.5" y="589.43" font-size="6.2" fill="#222" text-anchor="middle" textLength="27" lengthAdjust="spacingAndGlyphs" >運転モード</text>
<rect x="887.5" y="600.5" width="131" height="61" fill="#f0f0f0" stroke="#adadad" stroke-width="1" shape-rendering="crispEdges" />
<rect x="891.1" y="603.2" width="121.9" height="16.5" fill="#000" />
<text x="952" y="613.83" font-size="6.2" fill="#00d000" text-anchor="middle" textLength="12" lengthAdjust="spacingAndGlyphs" >自動</text>
<rect x="891.5" y="623.5" width="58" height="15" fill="#f0f0f0" stroke="#adadad" stroke-width="1" shape-rendering="crispEdges" />
<text x="920.5" y="633.33" font-size="6.2" fill="#333" text-anchor="middle" textLength="12" lengthAdjust="spacingAndGlyphs" >自動</text>
<rect x="954.5" y="623.5" width="58" height="15" fill="#f0f0f0" stroke="#adadad" stroke-width="1" shape-rendering="crispEdges" />
<text x="983.5" y="633.33" font-size="6.2" fill="#333" text-anchor="middle" textLength="12" lengthAdjust="spacingAndGlyphs" >手動</text>
<rect x="891.5" y="642.5" width="121" height="15" fill="#f0f0f0" stroke="#adadad" stroke-width="1" shape-rendering="crispEdges" />
<text x="952" y="652.54" font-size="6.5" fill="#333" text-anchor="middle" textLength="11.5" lengthAdjust="spacingAndGlyphs" >SET</text>
<rect x="887.5" y="666.5" width="131" height="61" fill="#f0f0f0" stroke="#adadad" stroke-width="1" shape-rendering="crispEdges" />
<rect x="891.1" y="669.4" width="121.9" height="16.5" fill="#000" />
<text x="952" y="680.03" font-size="6.2" fill="#00d000" text-anchor="middle" textLength="17.5" lengthAdjust="spacingAndGlyphs" >リモート</text>
<rect x="891.5" y="689.5" width="58" height="15" fill="#f0f0f0" stroke="#adadad" stroke-width="1" shape-rendering="crispEdges" />
<text x="920.5" y="699.53" font-size="6.2" fill="#333" text-anchor="middle" textLength="17.5" lengthAdjust="spacingAndGlyphs" >リモート</text>
<rect x="954.5" y="689.5" width="58" height="15" fill="#f0f0f0" stroke="#adadad" stroke-width="1" shape-rendering="crispEdges" />
<text x="983.5" y="699.53" font-size="6.2" fill="#333" text-anchor="middle" textLength="17.5" lengthAdjust="spacingAndGlyphs" >ローカル</text>
<rect x="891.5" y="708.5" width="121" height="16" fill="#f0f0f0" stroke="#adadad" stroke-width="1" shape-rendering="crispEdges" />
<text x="952" y="718.74" font-size="6.5" fill="#333" text-anchor="middle" textLength="11.5" lengthAdjust="spacingAndGlyphs" >SET</text>
<rect x="874.2" y="733.4" width="154.6" height="15.2" fill="#c0c0c0" />
<text x="951.5" y="743.53" font-size="6.2" fill="#222" text-anchor="middle" textLength="34" lengthAdjust="spacingAndGlyphs" >オプション選択</text>
<text x="944.3" y="761.80" font-size="6.4" fill="#222" text-anchor="end" textLength="46" lengthAdjust="spacingAndGlyphs" >オートクリーニング</text>
<text x="962.8" y="761.80" font-size="6.4" fill="#333" textLength="11" lengthAdjust="spacingAndGlyphs" >OFF</text>
<rect x="977.4" y="754.8" width="24.3" height="9.4" fill="#fff" stroke="#000" stroke-width="1.3" rx="4.7" />
<rect x="979" y="756.2" width="11" height="6.6" fill="#00ff00" rx="3.3" />
<text x="1005" y="761.80" font-size="6.4" fill="#333" textLength="9" lengthAdjust="spacingAndGlyphs" >ON</text>
<text x="944.3" y="779.30" font-size="6.4" fill="#222" text-anchor="end" textLength="41" lengthAdjust="spacingAndGlyphs" >スクリーンモード</text>
<text x="962.8" y="779.30" font-size="6.4" fill="#333" textLength="11" lengthAdjust="spacingAndGlyphs" >OFF</text>
<rect x="977.4" y="772.3" width="24.3" height="9.4" fill="#fff" stroke="#000" stroke-width="1.3" rx="4.7" />
<rect x="979" y="773.7" width="11" height="6.6" fill="#00ff00" rx="3.3" />
<text x="1005" y="779.30" font-size="6.4" fill="#333" textLength="9" lengthAdjust="spacingAndGlyphs" >ON</text>
<text x="944.3" y="796.70" font-size="6.4" fill="#222" text-anchor="end" textLength="40" lengthAdjust="spacingAndGlyphs" >エコ運転モード</text>
<text x="962.8" y="796.70" font-size="6.4" fill="#333" textLength="11" lengthAdjust="spacingAndGlyphs" >OFF</text>
<rect x="977.4" y="789.7" width="24.3" height="9.4" fill="#fff" stroke="#000" stroke-width="1.3" rx="4.7" />
<rect x="979" y="791.1" width="11" height="6.6" fill="#00ff00" rx="3.3" />
<text x="1005" y="796.70" font-size="6.4" fill="#333" textLength="9" lengthAdjust="spacingAndGlyphs" >ON</text>
<rect x="1050.5" y="480.5" width="68" height="33" fill="#f0f0f0" stroke="#adadad" stroke-width="1" shape-rendering="crispEdges" />
<text x="1053.8" y="491.17" font-size="6.3" fill="#333" textLength="32" lengthAdjust="spacingAndGlyphs" >吐出流量#1</text>
<rect x="1054" y="496.1" width="44" height="14.8" fill="#000" />
<text x="1095" y="506.78" font-size="8" fill="#00ff00" text-anchor="end" textLength="21.6506" lengthAdjust="spacingAndGlyphs" >9317.0</text>
<text x="1102" y="506.42" font-size="7" fill="#333" textLength="11.5" lengthAdjust="spacingAndGlyphs" >kl/h</text>
<rect x="1130.5" y="480.5" width="68" height="33" fill="#f0f0f0" stroke="#adadad" stroke-width="1" shape-rendering="crispEdges" />
<text x="1133.8" y="491.17" font-size="6.3" fill="#333" textLength="32" lengthAdjust="spacingAndGlyphs" >吐出流量#2</text>
<rect x="1134" y="496.1" width="45" height="14.8" fill="#000" />
<text x="1176" y="506.78" font-size="8" fill="#00ff00" text-anchor="end" textLength="21.6506" lengthAdjust="spacingAndGlyphs" >9863.0</text>
<text x="1183" y="506.42" font-size="7" fill="#333" textLength="11.5" lengthAdjust="spacingAndGlyphs" >kl/h</text>
<rect x="1050.5" y="524.5" width="68" height="34" fill="#f0f0f0" stroke="#adadad" stroke-width="1" shape-rendering="crispEdges" />
<text x="1053.8" y="535.37" font-size="6.3" fill="#333" textLength="32" lengthAdjust="spacingAndGlyphs" >吐出流量#3</text>
<rect x="1054" y="540.3" width="44" height="14.8" fill="#000" />
<text x="1095" y="550.98" font-size="8" fill="#00ff00" text-anchor="end" textLength="21.6506" lengthAdjust="spacingAndGlyphs" >9931.0</text>
<text x="1102" y="550.62" font-size="7" fill="#333" textLength="11.5" lengthAdjust="spacingAndGlyphs" >kl/h</text>
<rect x="1130.5" y="524.5" width="68" height="34" fill="#f0f0f0" stroke="#adadad" stroke-width="1" shape-rendering="crispEdges" />
<text x="1133.8" y="535.37" font-size="6.3" fill="#333" textLength="32" lengthAdjust="spacingAndGlyphs" >吐出流量#4</text>
<rect x="1134" y="540.3" width="45" height="14.8" fill="#000" />
<text x="1176" y="550.98" font-size="8" fill="#00ff00" text-anchor="end" textLength="21.6506" lengthAdjust="spacingAndGlyphs" >3986.0</text>
<text x="1183" y="550.62" font-size="7" fill="#333" textLength="11.5" lengthAdjust="spacingAndGlyphs" >kl/h</text>
<rect x="1218" y="480" width="75.8" height="81.7" fill="#000" rx="6.5" />
<circle cx="1256.7" cy="524.5" r="32.3" fill="#fff" stroke="#222" stroke-width="1" />
<circle cx="1256.7" cy="524.5" r="31.2" fill="none" stroke="#888" stroke-width="0.8" />
<text x="1256.7" y="487.03" font-size="4.8" fill="#e8e8e8" text-anchor="middle" >電流</text>
<line x1="1230.29" y1="539.75" x2="1233.92" y2="537.65" stroke="#000" stroke-width="1" />
<text x="1236.52" y="537.65" font-size="3.6" fill="#333" text-anchor="middle" >0.0</text>
<line x1="1226" y1="524.5" x2="1230" y2="524.5" stroke="#000" stroke-width="1"  shape-rendering="crispEdges"/>
<text x="1233.4" y="526.00" font-size="3.6" fill="#333" text-anchor="middle" >12.5</text>
<line x1="1230.29" y1="509.25" x2="1233.92" y2="511.35" stroke="#000" stroke-width="1" />
<text x="1236.52" y="514.35" font-size="3.6" fill="#333" text-anchor="middle" >25.0</text>
<line x1="1241.45" y1="498.086" x2="1243.55" y2="501.724" stroke="#000" stroke-width="1" />
<text x="1245.05" y="505.82" font-size="3.6" fill="#333" text-anchor="middle" >37.5</text>
<line x1="1256.5" y1="494" x2="1256.5" y2="498" stroke="#000" stroke-width="1"  shape-rendering="crispEdges"/>
<text x="1256.7" y="502.70" font-size="3.6" fill="#333" text-anchor="middle" >50.0</text>
<line x1="1271.95" y1="498.086" x2="1269.85" y2="501.724" stroke="#000" stroke-width="1" />
<text x="1268.35" y="505.82" font-size="3.6" fill="#333" text-anchor="middle" >62.5</text>
<line x1="1283.11" y1="509.25" x2="1279.48" y2="511.35" stroke="#000" stroke-width="1" />
<text x="1276.88" y="514.35" font-size="3.6" fill="#333" text-anchor="middle" >75.0</text>
<line x1="1287" y1="524.5" x2="1283" y2="524.5" stroke="#000" stroke-width="1"  shape-rendering="crispEdges"/>
<text x="1280" y="526.00" font-size="3.6" fill="#333" text-anchor="middle" >87.5</text>
<line x1="1283.11" y1="539.75" x2="1279.48" y2="537.65" stroke="#000" stroke-width="1" />
<text x="1276.88" y="537.65" font-size="3.6" fill="#333" text-anchor="middle" >100.0</text>
<polygon points="1227.5,521 1229.5,521 1230.1,516.2 1228.1,516.2" fill="#f0a050" />
<text x="1256.7" y="540.36" font-size="6" fill="#333" text-anchor="middle" >A</text>
<rect x="1243.5" y="543.5" width="26" height="8" fill="#fff" stroke="#999" stroke-width="1" shape-rendering="crispEdges" />
<text x="1256.7" y="550.14" font-size="6.5" fill="#444" text-anchor="middle" >87.0</text>
<line x1="1256.7" y1="524.5" x2="1286.19" y2="523.779" stroke="#ff0000" stroke-width="1.9" />
<rect x="1307" y="480" width="75.8" height="81.7" fill="#000" rx="6.5" />
<circle cx="1344.7" cy="524.5" r="32.3" fill="#fff" stroke="#222" stroke-width="1" />
<circle cx="1344.7" cy="524.5" r="31.2" fill="none" stroke="#888" stroke-width="0.8" />
<text x="1344.7" y="487.03" font-size="4.8" fill="#e8e8e8" text-anchor="middle" >電圧</text>
<line x1="1318.29" y1="539.75" x2="1321.92" y2="537.65" stroke="#000" stroke-width="1" />
<text x="1324.52" y="537.65" font-size="3.6" fill="#333" text-anchor="middle" >0.0</text>
<line x1="1314" y1="524.5" x2="1318" y2="524.5" stroke="#000" stroke-width="1"  shape-rendering="crispEdges"/>
<text x="1321.4" y="526.00" font-size="3.6" fill="#333" text-anchor="middle" >12.5</text>
<line x1="1318.29" y1="509.25" x2="1321.92" y2="511.35" stroke="#000" stroke-width="1" />
<text x="1324.52" y="514.35" font-size="3.6" fill="#333" text-anchor="middle" >25.0</text>
<line x1="1329.45" y1="498.086" x2="1331.55" y2="501.724" stroke="#000" stroke-width="1" />
<text x="1333.05" y="505.82" font-size="3.6" fill="#333" text-anchor="middle" >37.5</text>
<line x1="1344.5" y1="494" x2="1344.5" y2="498" stroke="#000" stroke-width="1"  shape-rendering="crispEdges"/>
<text x="1344.7" y="502.70" font-size="3.6" fill="#333" text-anchor="middle" >50.0</text>
<line x1="1359.95" y1="498.086" x2="1357.85" y2="501.724" stroke="#000" stroke-width="1" />
<text x="1356.35" y="505.82" font-size="3.6" fill="#333" text-anchor="middle" >62.5</text>
<line x1="1371.11" y1="509.25" x2="1367.48" y2="511.35" stroke="#000" stroke-width="1" />
<text x="1364.88" y="514.35" font-size="3.6" fill="#333" text-anchor="middle" >75.0</text>
<line x1="1375" y1="524.5" x2="1371" y2="524.5" stroke="#000" stroke-width="1"  shape-rendering="crispEdges"/>
<text x="1368" y="526.00" font-size="3.6" fill="#333" text-anchor="middle" >87.5</text>
<line x1="1371.11" y1="539.75" x2="1367.48" y2="537.65" stroke="#000" stroke-width="1" />
<text x="1364.88" y="537.65" font-size="3.6" fill="#333" text-anchor="middle" >100.0</text>
<path d="M1323.64 504.86 A28.8 28.8 0 0 1 1344.70 495.70" fill="none" stroke="#00ff00" stroke-width="3" />
<line x1="1344.5" y1="494" x2="1344.5" y2="498" stroke="#000" stroke-width="1"  shape-rendering="crispEdges"/>
<text x="1344.7" y="540.36" font-size="6" fill="#333" text-anchor="middle" >V</text>
<rect x="1331.5" y="543.5" width="26" height="8" fill="#fff" stroke="#999" stroke-width="1" shape-rendering="crispEdges" />
<text x="1344.7" y="550.14" font-size="6.5" fill="#444" text-anchor="middle" >4.0</text>
<line x1="1344.7" y1="524.5" x2="1316.81" y2="534.104" stroke="#ff0000" stroke-width="1.9" />
<rect x="1050.5" y="565.5" width="331" height="104" fill="#404040" stroke="#333" stroke-width="1" shape-rendering="crispEdges" />
<rect x="1054.5" y="569.5" width="52" height="47" fill="#ffffe1" stroke="#000" stroke-width="1" shape-rendering="crispEdges" />
<text x="1080.4" y="587.73" font-size="6.2" fill="#222" text-anchor="middle" textLength="24" lengthAdjust="spacingAndGlyphs" >運転準備</text>
<text x="1080.4" y="601.93" font-size="6.2" fill="#222" text-anchor="middle" textLength="12" lengthAdjust="spacingAndGlyphs" >完了</text>
<rect x="1109.5" y="569.5" width="51" height="47" fill="#808080" stroke="#000" stroke-width="1" shape-rendering="crispEdges" />
<text x="1134.82" y="587.73" font-size="6.2" fill="#222" text-anchor="middle" textLength="24" lengthAdjust="spacingAndGlyphs" >制御油圧</text>
<text x="1134.82" y="601.93" font-size="6.2" fill="#222" text-anchor="middle" textLength="12" lengthAdjust="spacingAndGlyphs" >正常</text>
<rect x="1163.5" y="569.5" width="52" height="47" fill="#808080" stroke="#000" stroke-width="1" shape-rendering="crispEdges" />
<text x="1189.24" y="587.73" font-size="6.2" fill="#222" text-anchor="middle" textLength="33" lengthAdjust="spacingAndGlyphs" >潤滑油レベル</text>
<text x="1189.24" y="601.93" font-size="6.2" fill="#222" text-anchor="middle" textLength="12" lengthAdjust="spacingAndGlyphs" >正常</text>
<rect x="1217.5" y="569.5" width="52" height="47" fill="#808080" stroke="#000" stroke-width="1" shape-rendering="crispEdges" />
<text x="1243.66" y="587.73" font-size="6.2" fill="#222" text-anchor="middle" textLength="18" lengthAdjust="spacingAndGlyphs" >油温度</text>
<text x="1243.66" y="601.93" font-size="6.2" fill="#222" text-anchor="middle" textLength="12" lengthAdjust="spacingAndGlyphs" >正常</text>
<rect x="1272.5" y="569.5" width="51" height="47" fill="#808080" stroke="#000" stroke-width="1" shape-rendering="crispEdges" />
<text x="1298.08" y="587.73" font-size="6.2" fill="#222" text-anchor="middle" textLength="18" lengthAdjust="spacingAndGlyphs" >吐出弁</text>
<text x="1298.08" y="601.93" font-size="6.2" fill="#222" text-anchor="middle" textLength="12" lengthAdjust="spacingAndGlyphs" >全閉</text>
<rect x="1326.5" y="569.5" width="52" height="47" fill="#808080" stroke="#000" stroke-width="1" shape-rendering="crispEdges" />
<text x="1352.5" y="587.73" font-size="6.2" fill="#222" text-anchor="middle" textLength="19.5" lengthAdjust="spacingAndGlyphs" >ドレン弁</text>
<text x="1352.5" y="601.93" font-size="6.2" fill="#222" text-anchor="middle" textLength="12" lengthAdjust="spacingAndGlyphs" >全閉</text>
<rect x="1054.5" y="619.5" width="52" height="47" fill="#808080" stroke="#000" stroke-width="1" shape-rendering="crispEdges" />
<text x="1080.4" y="644.73" font-size="6.2" fill="#222" text-anchor="middle" textLength="30" lengthAdjust="spacingAndGlyphs" >起動処理中</text>
<rect x="1109.5" y="619.5" width="51" height="47" fill="#808080" stroke="#000" stroke-width="1" shape-rendering="crispEdges" />
<text x="1134.82" y="644.73" font-size="6.2" fill="#222" text-anchor="middle" textLength="30" lengthAdjust="spacingAndGlyphs" >停止処理中</text>
<rect x="1163.5" y="619.5" width="52" height="47" fill="#808080" stroke="#000" stroke-width="1" shape-rendering="crispEdges" />
<text x="1189.24" y="644.73" font-size="6.2" fill="#222" text-anchor="middle" textLength="24" lengthAdjust="spacingAndGlyphs" >起動渋滞</text>
<rect x="1217.5" y="619.5" width="52" height="47" fill="#808080" stroke="#000" stroke-width="1" shape-rendering="crispEdges" />
<text x="1243.66" y="644.73" font-size="6.2" fill="#222" text-anchor="middle" textLength="24" lengthAdjust="spacingAndGlyphs" >停止渋滞</text>
<rect x="1272.5" y="619.5" width="51" height="47" fill="#808080" stroke="#000" stroke-width="1" shape-rendering="crispEdges" />
<text x="1298.08" y="637.83" font-size="6.2" fill="#222" text-anchor="middle" textLength="24" lengthAdjust="spacingAndGlyphs" >主動力系</text>
<text x="1298.08" y="652.03" font-size="6.2" fill="#222" text-anchor="middle" textLength="17" lengthAdjust="spacingAndGlyphs" >トリップ</text>
<rect x="1326.5" y="619.5" width="52" height="47" fill="#808080" stroke="#000" stroke-width="1" shape-rendering="crispEdges" />
<text x="1352.5" y="637.83" font-size="6.2" fill="#222" text-anchor="middle" textLength="30" lengthAdjust="spacingAndGlyphs" >機側安全弁</text>
<text x="1352.5" y="652.03" font-size="6.2" fill="#222" text-anchor="middle" textLength="12" lengthAdjust="spacingAndGlyphs" >全閉</text>
<rect x="1050.5" y="675.5" width="331" height="131" fill="#f0f0f0" stroke="#adadad" stroke-width="1" shape-rendering="crispEdges" />
<rect x="1054" y="678.2" width="323" height="15.4" fill="#c0c0c0" />
<text x="1215.5" y="688.43" font-size="6.2" fill="#222" text-anchor="middle" textLength="26" lengthAdjust="spacingAndGlyphs" >モニタリング</text>
<rect x="1059.5" y="701.5" width="50" height="96" fill="#f0f0f0" stroke="#adadad" stroke-width="1" shape-rendering="crispEdges" />
<text x="1063.2" y="710.97" font-size="6.3" fill="#222" textLength="18" lengthAdjust="spacingAndGlyphs" >回転数</text>
<rect x="1063.5" y="715.5" width="43" height="15" fill="#000" stroke="#888" stroke-width="1" shape-rendering="crispEdges" />
<text x="1103" y="726.08" font-size="8" fill="#00ff00" text-anchor="end" textLength="7.87296" lengthAdjust="spacingAndGlyphs" >92</text>
<text x="1106" y="739.09" font-size="5.8" fill="#444" text-anchor="end" >rpm</text>
<rect x="1068" y="750" width="22.6" height="41.8" fill="#909090" />
<rect x="1069" y="753" width="20.6" height="38.2" fill="#ff0000" />
<line x1="1066" y1="753.5" x2="1090" y2="753.5" stroke="#444" stroke-width="1"  shape-rendering="crispEdges"/>
<line x1="1066" y1="757.5" x2="1090" y2="757.5" stroke="#444" stroke-width="1"  shape-rendering="crispEdges"/>
<polygon points="1064.2,751.6 1064.2,755.6 1067,753.6" fill="#fff" stroke="#333" stroke-width="0.7" />
<polygon points="1064.2,755.6 1064.2,759.6 1067,757.6" fill="#ffa030" stroke="#333" stroke-width="0.7" />
<line x1="1091.5" y1="750" x2="1091.5" y2="792" stroke="#777" stroke-width="1"  shape-rendering="crispEdges"/>
<line x1="1092" y1="750.5" x2="1094" y2="750.5" stroke="#777" stroke-width="1"  shape-rendering="crispEdges"/>
<line x1="1092" y1="754.5" x2="1093" y2="754.5" stroke="#777" stroke-width="1"  shape-rendering="crispEdges"/>
<line x1="1092" y1="758.5" x2="1093" y2="758.5" stroke="#777" stroke-width="1"  shape-rendering="crispEdges"/>
<line x1="1092" y1="762.5" x2="1093" y2="762.5" stroke="#777" stroke-width="1"  shape-rendering="crispEdges"/>
<line x1="1092" y1="766.5" x2="1093" y2="766.5" stroke="#777" stroke-width="1"  shape-rendering="crispEdges"/>
<line x1="1092" y1="770.5" x2="1094" y2="770.5" stroke="#777" stroke-width="1"  shape-rendering="crispEdges"/>
<line x1="1092" y1="775.5" x2="1093" y2="775.5" stroke="#777" stroke-width="1"  shape-rendering="crispEdges"/>
<line x1="1092" y1="779.5" x2="1093" y2="779.5" stroke="#777" stroke-width="1"  shape-rendering="crispEdges"/>
<line x1="1092" y1="783.5" x2="1093" y2="783.5" stroke="#777" stroke-width="1"  shape-rendering="crispEdges"/>
<line x1="1092" y1="787.5" x2="1093" y2="787.5" stroke="#777" stroke-width="1"  shape-rendering="crispEdges"/>
<line x1="1092" y1="791.5" x2="1094" y2="791.5" stroke="#777" stroke-width="1"  shape-rendering="crispEdges"/>
<text x="1094.2" y="751.87" font-size="3.8" fill="#333" >100</text>
<text x="1094.2" y="772.07" font-size="3.8" fill="#333" >50</text>
<text x="1094.2" y="792.67" font-size="3.8" fill="#333" >0</text>
<rect x="1125.5" y="701.5" width="51" height="96" fill="#f0f0f0" stroke="#adadad" stroke-width="1" shape-rendering="crispEdges" />
<text x="1128.8" y="710.97" font-size="6.3" fill="#222" textLength="32" lengthAdjust="spacingAndGlyphs" >軸位置モニタ</text>
<rect x="1129.5" y="715.5" width="44" height="15" fill="#000" stroke="#888" stroke-width="1" shape-rendering="crispEdges" />
<text x="1170.5" y="726.08" font-size="8" fill="#00ff00" text-anchor="end" textLength="20.0718" lengthAdjust="spacingAndGlyphs" >-30.00</text>
<text x="1171.7" y="739.09" font-size="5.8" fill="#444" text-anchor="end" >μmm</text>
<rect x="1134.5" y="750" width="21.7" height="41.8" fill="#808080" />
<rect x="1134.5" y="770.6" width="20.7" height="11.8" fill="#00ff00" />
<line x1="1132" y1="758.5" x2="1156" y2="758.5" stroke="#333" stroke-width="1"  shape-rendering="crispEdges"/>
<line x1="1132" y1="782.5" x2="1156" y2="782.5" stroke="#333" stroke-width="1"  shape-rendering="crispEdges"/>
<polygon points="1130.2,756 1130.2,760 1133,758" fill="#fff" stroke="#333" stroke-width="0.7" />
<polygon points="1130.2,780.7 1130.2,784.7 1133,782.7" fill="#fff" stroke="#333" stroke-width="0.7" />
<line x1="1157.5" y1="750" x2="1157.5" y2="792" stroke="#777" stroke-width="1"  shape-rendering="crispEdges"/>
<line x1="1157" y1="750.5" x2="1159" y2="750.5" stroke="#777" stroke-width="1"  shape-rendering="crispEdges"/>
<line x1="1157" y1="754.5" x2="1158" y2="754.5" stroke="#777" stroke-width="1"  shape-rendering="crispEdges"/>
<line x1="1157" y1="758.5" x2="1158" y2="758.5" stroke="#777" stroke-width="1"  shape-rendering="crispEdges"/>
<line x1="1157" y1="762.5" x2="1158" y2="762.5" stroke="#777" stroke-width="1"  shape-rendering="crispEdges"/>
<line x1="1157" y1="766.5" x2="1158" y2="766.5" stroke="#777" stroke-width="1"  shape-rendering="crispEdges"/>
<line x1="1157" y1="770.5" x2="1159" y2="770.5" stroke="#777" stroke-width="1"  shape-rendering="crispEdges"/>
<line x1="1157" y1="775.5" x2="1158" y2="775.5" stroke="#777" stroke-width="1"  shape-rendering="crispEdges"/>
<line x1="1157" y1="779.5" x2="1158" y2="779.5" stroke="#777" stroke-width="1"  shape-rendering="crispEdges"/>
<line x1="1157" y1="783.5" x2="1158" y2="783.5" stroke="#777" stroke-width="1"  shape-rendering="crispEdges"/>
<line x1="1157" y1="787.5" x2="1158" y2="787.5" stroke="#777" stroke-width="1"  shape-rendering="crispEdges"/>
<line x1="1157" y1="791.5" x2="1159" y2="791.5" stroke="#777" stroke-width="1"  shape-rendering="crispEdges"/>
<text x="1160.2" y="751.87" font-size="3.8" fill="#333" >50.00</text>
<text x="1160.2" y="772.07" font-size="3.8" fill="#333" >0.00</text>
<text x="1160.2" y="792.67" font-size="3.8" fill="#333" >-50.00</text>
<rect x="1187.5" y="701.5" width="189" height="96" fill="#f0f0f0" stroke="#adadad" stroke-width="1" shape-rendering="crispEdges" />
<rect x="1201.5" y="708.5" width="8" height="8" fill="#808080" stroke="#000" stroke-width="1" shape-rendering="crispEdges" />
<text x="1212.1" y="714.63" font-size="6.2" fill="#222" textLength="39" lengthAdjust="spacingAndGlyphs" >モーターサーマル</text>
<rect x="1201.5" y="722.5" width="8" height="8" fill="#808080" stroke="#000" stroke-width="1" shape-rendering="crispEdges" />
<text x="1212.1" y="729.23" font-size="6.2" fill="#222" textLength="45" lengthAdjust="spacingAndGlyphs" >軸受#1温度超過</text>
<rect x="1201.5" y="737.5" width="8" height="8" fill="#808080" stroke="#000" stroke-width="1" shape-rendering="crispEdges" />
<text x="1212.1" y="743.93" font-size="6.2" fill="#222" textLength="45" lengthAdjust="spacingAndGlyphs" >軸受#2温度超過</text>
<rect x="1201.5" y="751.5" width="8" height="8" fill="#808080" stroke="#000" stroke-width="1" shape-rendering="crispEdges" />
<text x="1212.1" y="758.03" font-size="6.2" fill="#222" textLength="45" lengthAdjust="spacingAndGlyphs" >軸受#3温度超過</text>
<rect x="1201.5" y="766.5" width="8" height="8" fill="#808080" stroke="#000" stroke-width="1" shape-rendering="crispEdges" />
<text x="1212.1" y="773.03" font-size="6.2" fill="#222" textLength="45" lengthAdjust="spacingAndGlyphs" >軸受#4温度超過</text>
<rect x="1201.5" y="780.5" width="8" height="8" fill="#808080" stroke="#000" stroke-width="1" shape-rendering="crispEdges" />
<text x="1212.1" y="786.93" font-size="6.2" fill="#222" textLength="18" lengthAdjust="spacingAndGlyphs" >過電流</text>
<rect x="1289.5" y="708.5" width="8" height="8" fill="#808080" stroke="#000" stroke-width="1" shape-rendering="crispEdges" />
<text x="1300.4" y="714.63" font-size="6.2" fill="#222" textLength="24" lengthAdjust="spacingAndGlyphs" >電圧降下</text>
<rect x="1289.5" y="722.5" width="8" height="8" fill="#808080" stroke="#000" stroke-width="1" shape-rendering="crispEdges" />
<text x="1300.4" y="729.23" font-size="6.2" fill="#222" textLength="43.5" lengthAdjust="spacingAndGlyphs" >温度センサー異常</text>
<rect x="1289.5" y="737.5" width="8" height="8" fill="#808080" stroke="#000" stroke-width="1" shape-rendering="crispEdges" />
<text x="1300.4" y="743.93" font-size="6.2" fill="#222" textLength="37.5" lengthAdjust="spacingAndGlyphs" >フィルタ目詰まり</text>
<rect x="1289.5" y="751.5" width="8" height="8" fill="#808080" stroke="#000" stroke-width="1" shape-rendering="crispEdges" />
<text x="1300.4" y="758.03" font-size="6.2" fill="#222" textLength="34" lengthAdjust="spacingAndGlyphs" >フィルタ未装着</text>
<rect x="1289.5" y="766.5" width="8" height="8" fill="#808080" stroke="#000" stroke-width="1" shape-rendering="crispEdges" />
<text x="1300.4" y="773.03" font-size="6.2" fill="#222" textLength="35" lengthAdjust="spacingAndGlyphs" >ベルト#1断裂</text>
<rect x="1289.5" y="780.5" width="8" height="8" fill="#808080" stroke="#000" stroke-width="1" shape-rendering="crispEdges" />
<text x="1300.4" y="786.93" font-size="6.2" fill="#222" textLength="35" lengthAdjust="spacingAndGlyphs" >ベルト#2断裂</text>
<rect x="201" y="819.5" width="1141" height="19.5" fill="#e5e5e5" />
<line x1="201" y1="819.5" x2="1342" y2="819.5" stroke="#bdbdbd" stroke-width="1"  shape-rendering="crispEdges"/>
<line x1="272.5" y1="820" x2="272.5" y2="839" stroke="#b8b8b8" stroke-width="1"  shape-rendering="crispEdges"/>
<line x1="412.5" y1="820" x2="412.5" y2="839" stroke="#b8b8b8" stroke-width="1"  shape-rendering="crispEdges"/>
<line x1="552.5" y1="820" x2="552.5" y2="839" stroke="#b8b8b8" stroke-width="1"  shape-rendering="crispEdges"/>
<line x1="652.5" y1="820" x2="652.5" y2="839" stroke="#b8b8b8" stroke-width="1"  shape-rendering="crispEdges"/>
<text x="213.5" y="834.28" font-size="13" fill="#000" textLength="48" lengthAdjust="spacingAndGlyphs" >AlarmID</text>
<text x="342.5" y="833.88" font-size="13" fill="#000" text-anchor="middle" textLength="24.5" lengthAdjust="spacingAndGlyphs" >発生</text>
<text x="482.5" y="833.88" font-size="13" fill="#000" text-anchor="middle" textLength="53" lengthAdjust="spacingAndGlyphs" >確認/復帰</text>
<text x="602.5" y="833.88" font-size="13" fill="#000" text-anchor="middle" textLength="54.5" lengthAdjust="spacingAndGlyphs" >警報レベル</text>
<text x="656.5" y="833.88" font-size="13" fill="#000" textLength="46" lengthAdjust="spacingAndGlyphs" >メッセージ</text>
<rect x="201" y="839" width="1141" height="60" fill="#000" />
<rect x="1342" y="819" width="97" height="80" fill="#464646" />
<line x1="1359.5" y1="819" x2="1359.5" y2="899" stroke="#6a6a6a" stroke-width="1"  shape-rendering="crispEdges"/>
<line x1="1360" y1="859.5" x2="1439" y2="859.5" stroke="#6a6a6a" stroke-width="1"  shape-rendering="crispEdges"/>
<polygon points="1347.8,830.5 1354,830.5 1350.9,825" fill="#bdbdbd" />
<polygon points="1347.8,888 1354,888 1350.9,893.5" fill="#bdbdbd" />
<rect x="1365.5" y="833.5" width="11" height="12" fill="none" stroke="#c8c8c8" stroke-width="1" shape-rendering="crispEdges" />
<path d="M1367.8 838.5 L1371 842.8 L1380 833" fill="none" stroke="#d8d8d8" stroke-width="2.2" />
<text x="1386.5" y="844.84" font-size="14" fill="#fff" textLength="43.5" lengthAdjust="spacingAndGlyphs" >一括確認</text>
<path d="M1365 875 H1369.5 L1375.3 872 V885.8 L1369.5 882.5 H1365 Z" fill="none" stroke="#c8c8c8" stroke-width="1.2" />
<line x1="1378.5" y1="876" x2="1378.5" y2="882" stroke="#c8c8c8" stroke-width="1"  shape-rendering="crispEdges"/>
<line x1="1381.5" y1="876" x2="1381.5" y2="882" stroke="#c8c8c8" stroke-width="1"  shape-rendering="crispEdges"/>
<text x="1386.5" y="885.54" font-size="14" fill="#fff" textLength="43.5" lengthAdjust="spacingAndGlyphs" >一時停止</text>
<rect x="795.3" y="96.4" width="28.3" height="31.4" fill="none" stroke="#ff0000" stroke-width="2" rx="5.5" stroke-dasharray="5.5 3"/>
<rect x="806.5" y="107.5" width="8" height="8" fill="none" stroke="#000" stroke-width="1" shape-rendering="crispEdges" />
<rect x="806" y="106.9" width="9" height="2" fill="#000" />
<rect x="1408.3" y="96.4" width="28.3" height="31.4" fill="none" stroke="#ff0000" stroke-width="2" rx="5.5" stroke-dasharray="5.5 3"/>
<rect x="1417.5" y="107.5" width="8" height="8" fill="none" stroke="#000" stroke-width="1" shape-rendering="crispEdges" />
<rect x="1417" y="106.9" width="9" height="2" fill="#000" />
<rect x="795.4" y="449.1" width="28.3" height="31.4" fill="none" stroke="#ff0000" stroke-width="2" rx="5.5" stroke-dasharray="5.5 3"/>
<rect x="806.5" y="462.5" width="8" height="8" fill="none" stroke="#000" stroke-width="1" shape-rendering="crispEdges" />
<rect x="806.1" y="461.8" width="9" height="2" fill="#000" />
<rect x="1408.3" y="449.1" width="28.3" height="31.4" fill="none" stroke="#ff0000" stroke-width="2" rx="5.5" stroke-dasharray="5.5 3"/>
<rect x="1417.5" y="462.5" width="8" height="8" fill="none" stroke="#000" stroke-width="1" shape-rendering="crispEdges" />
<rect x="1417" y="461.8" width="9" height="2" fill="#000" />
<rect x="1439" y="0" width="1" height="900" fill="#5a5a5a" />
<rect x="0" y="899" width="1440" height="1" fill="#5a5a5a" />
</svg>
</body></html>
